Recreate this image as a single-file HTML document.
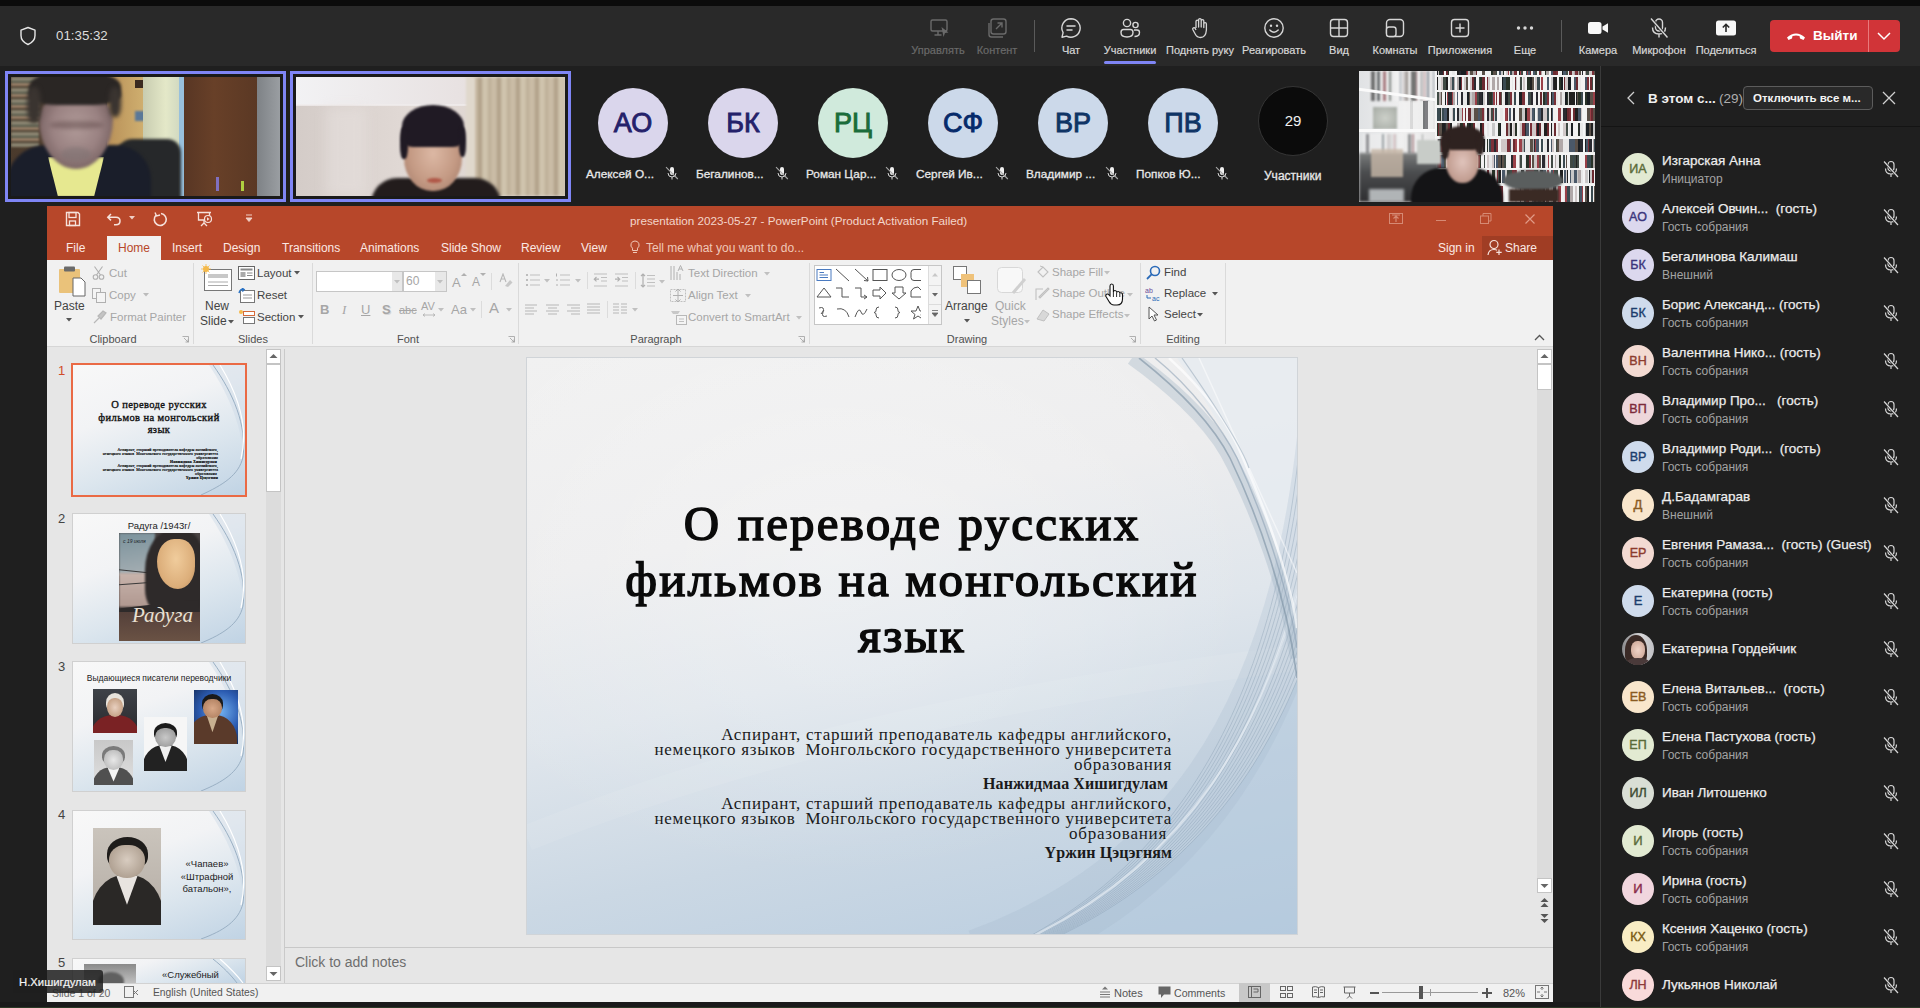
<!DOCTYPE html>
<html><head><meta charset="utf-8">
<style>
*{margin:0;padding:0;box-sizing:border-box}
html,body{width:1920px;height:1008px;overflow:hidden;background:#1f1f1f;font-family:"Liberation Sans",sans-serif;position:relative}
.a{position:absolute}
#topstrip{left:0;top:0;width:1920px;height:6px;background:#0b0b0b}
#hdr{left:0;top:6px;width:1920px;height:60px;background:#292929}
.tb{position:absolute;top:0;height:61px;text-align:center;color:#d6d6d6;font-size:11px}
.tb .lbl{position:absolute;left:-50px;width:100px;top:44px;-webkit-text-stroke:0.2px currentColor;text-align:center;white-space:nowrap}
.tb svg{position:absolute;left:-11px;top:17px;width:22px;height:22px}
.dis{color:#6a6a6a}
.sep{position:absolute;width:1px;background:#5a5a5a}
#panel{left:1600px;top:66px;width:320px;height:942px;background:#1f1f1f;border-left:1px solid #3a3a3a}
.vid{position:absolute;overflow:hidden}
.av{position:absolute;width:70px;height:70px;border-radius:50%;text-align:center;line-height:70px;font-size:27px;-webkit-text-stroke:0.9px currentColor}
.pt{color:#fbe9e4;font-size:12px;white-space:nowrap}
.rt{position:absolute;font-size:11.5px;color:#444;white-space:nowrap}
.rd{position:absolute;font-size:11.5px;color:#a6a6a6;white-space:nowrap}
.gl{position:absolute;font-size:11px;color:#505050;white-space:nowrap;text-align:center}
.gs{position:absolute;top:263px;width:1px;height:81px;background:#dadada}
.st{font-family:"Liberation Serif",serif;font-weight:normal;-webkit-text-stroke:1.5px #0a0a0a;letter-spacing:2.2px;font-size:49px;line-height:56px;color:#0a0a0a;text-align:center;white-space:nowrap}
.ss{left:527px;width:645px;text-align:right;font-family:"Liberation Serif",serif;font-size:17px;line-height:15px;letter-spacing:0.75px;color:#1a1a1a;white-space:pre}
.sb{font-weight:bold;font-size:16px;letter-spacing:0.1px}
.th{overflow:hidden;background:linear-gradient(160deg,#f8f8f8 0%,#f2f3f5 35%,#dce6ee 65%,#c0d3e4 100%)}
.avn{position:absolute;color:#e8e8e8;font-size:11.8px;white-space:nowrap;-webkit-text-stroke:0.3px #e8e8e8}
</style></head><body>
<div id="topstrip" class="a"></div>
<div id="hdr" class="a"></div>
<!-- header -->
<svg class="a" style="left:19px;top:26px" width="18" height="20" viewBox="0 0 18 20"><path d="M9 1.5 L16 4.2 V9.5 C16 13.8 13 16.8 9 18.5 C5 16.8 2 13.8 2 9.5 V4.2 Z" fill="none" stroke="#e6e6e6" stroke-width="1.4" stroke-linejoin="round"/></svg>
<div class="a" style="left:56px;top:28px;font-size:13.3px;color:#dcdcdc">01:35:32</div>

<div class="tb dis" style="left:938px"><svg viewBox="0 0 22 22"><rect x="4" y="3" width="16" height="11" rx="1.5" fill="none" stroke="#6a6a6a" stroke-width="1.4"/><path d="M7.5 18h7M11 14v4" stroke="#6a6a6a" stroke-width="1.4"/><path d="M14.5 10 L21.5 15.5 L18 16 L16.5 20 Z" fill="#6a6a6a"/></svg><div class="lbl">Управлять</div></div>
<div class="tb dis" style="left:997px"><svg viewBox="0 0 22 22"><rect x="5" y="2" width="15" height="15" rx="2.5" fill="none" stroke="#6a6a6a" stroke-width="1.4"/><path d="M3 6v11.5A2.5 2.5 0 0 0 5.5 20H17" fill="none" stroke="#6a6a6a" stroke-width="1.4"/><path d="M10 12 L16 6 M11.5 6 H16 V10.5" fill="none" stroke="#6a6a6a" stroke-width="1.4"/></svg><div class="lbl">Контент</div></div>
<div class="sep" style="left:1034px;top:20px;height:32px"></div>
<div class="tb" style="left:1071px"><svg viewBox="0 0 22 22"><path d="M11 1.8 A9.2 9.2 0 1 1 6.6 19.1 L2 20.2 L3.1 15.6 A9.2 9.2 0 0 1 11 1.8 Z" fill="none" stroke="#d6d6d6" stroke-width="1.4" stroke-linejoin="round"/><path d="M7 9h8M7 13h5" stroke="#d6d6d6" stroke-width="1.5" stroke-linecap="round"/></svg><div class="lbl">Чат</div></div>
<div class="tb" style="left:1130px"><svg viewBox="0 0 22 22"><circle cx="8" cy="6" r="3.6" fill="none" stroke="#d6d6d6" stroke-width="1.4"/><circle cx="16.5" cy="8" r="2.6" fill="none" stroke="#d6d6d6" stroke-width="1.4"/><path d="M2 15.5 Q2 12.5 4.5 12.5 H11.5 Q14 12.5 14 15.5 Q14 20 8 20 Q2 20 2 15.5 Z" fill="none" stroke="#d6d6d6" stroke-width="1.4"/><path d="M15.5 19.5 Q20.5 19.5 20.5 15.5 Q20.5 13 18 13 H15" fill="none" stroke="#d6d6d6" stroke-width="1.4"/></svg><div class="lbl">Участники</div></div>
<div class="a" style="left:1104px;top:61px;width:52px;height:3px;border-radius:2px;background:#7f85f5"></div>
<div class="tb" style="left:1200px"><svg viewBox="0 0 22 22"><path d="M7 11 V4.5 a1.3 1.3 0 0 1 2.6 0 V10 V3 a1.3 1.3 0 0 1 2.6 0 V10 V4 a1.3 1.3 0 0 1 2.6 0 V10.5 V7 a1.3 1.3 0 0 1 2.6 0 V13 Q16.8 20.5 11.5 20.5 Q8 20.5 6.2 17 L3.8 12.5 a1.3 1.3 0 0 1 2.3 -1.2 L7 13" fill="none" stroke="#d6d6d6" stroke-width="1.3" stroke-linejoin="round"/></svg><div class="lbl">Поднять руку</div></div>
<div class="tb" style="left:1274px"><svg viewBox="0 0 22 22"><circle cx="11" cy="11" r="9.2" fill="none" stroke="#d6d6d6" stroke-width="1.4"/><circle cx="8" cy="8.8" r="1.2" fill="#d6d6d6"/><circle cx="14" cy="8.8" r="1.2" fill="#d6d6d6"/><path d="M6.8 13 Q11 17.5 15.2 13" fill="none" stroke="#d6d6d6" stroke-width="1.4" stroke-linecap="round"/></svg><div class="lbl">Реагировать</div></div>
<div class="tb" style="left:1339px"><svg viewBox="0 0 22 22"><rect x="2.5" y="2.5" width="17" height="17" rx="3" fill="none" stroke="#d6d6d6" stroke-width="1.4"/><path d="M11 2.5v17M2.5 11h17" stroke="#d6d6d6" stroke-width="1.4"/></svg><div class="lbl">Вид</div></div>
<div class="tb" style="left:1395px"><svg viewBox="0 0 22 22"><rect x="2.5" y="2.5" width="17" height="17" rx="3.5" fill="none" stroke="#d6d6d6" stroke-width="1.4"/><rect x="2.5" y="10" width="9.5" height="9.5" rx="2.5" fill="#292929" stroke="#d6d6d6" stroke-width="1.4"/></svg><div class="lbl">Комнаты</div></div>
<div class="tb" style="left:1460px"><svg viewBox="0 0 22 22"><rect x="2.5" y="2.5" width="17" height="17" rx="3" fill="none" stroke="#d6d6d6" stroke-width="1.4"/><path d="M11 6.5v9M6.5 11h9" stroke="#d6d6d6" stroke-width="1.4"/></svg><div class="lbl">Приложения</div></div>
<div class="tb" style="left:1525px"><svg viewBox="0 0 22 22"><circle cx="4.5" cy="11" r="1.7" fill="#d6d6d6"/><circle cx="11" cy="11" r="1.7" fill="#d6d6d6"/><circle cx="17.5" cy="11" r="1.7" fill="#d6d6d6"/></svg><div class="lbl">Еще</div></div>
<div class="sep" style="left:1561px;top:20px;height:32px"></div>
<div class="tb" style="left:1598px"><svg viewBox="0 0 22 22"><rect x="1" y="5" width="13.5" height="12" rx="2.5" fill="#f8f8f8"/><path d="M15.5 9.5 L21 6.3 V15.7 L15.5 12.5 Z" fill="#f8f8f8"/></svg><div class="lbl">Камера</div></div>
<div class="tb" style="left:1659px"><svg viewBox="0 0 22 22"><rect x="7.5" y="2" width="7" height="12" rx="3.5" fill="none" stroke="#d6d6d6" stroke-width="1.4"/><path d="M4.5 10.5 Q4.5 17 11 17 Q17.5 17 17.5 10.5 M11 17v3.5" fill="none" stroke="#d6d6d6" stroke-width="1.4"/><path d="M3 1.5 L19.5 20.5" stroke="#292929" stroke-width="3"/><path d="M3 1.5 L19.5 20.5" stroke="#d6d6d6" stroke-width="1.4"/></svg><div class="lbl">Микрофон</div></div>
<div class="tb" style="left:1726px"><svg viewBox="0 0 22 22"><rect x="1" y="3.5" width="20" height="15" rx="2.5" fill="#f8f8f8"/><path d="M11 15V7.5M7.8 10.5 L11 7.3 L14.2 10.5" fill="none" stroke="#292929" stroke-width="1.6"/></svg><div class="lbl">Поделиться</div></div>
<div class="a" style="left:1770px;top:20px;width:130px;height:32px;border-radius:4px;background:#d13438"></div>
<div class="a" style="left:1868px;top:20px;width:1px;height:32px;background:#e87a7c"></div>
<svg class="a" style="left:1785px;top:28px" width="22" height="16" viewBox="0 0 22 16"><path d="M2 9.5 Q11 1.5 20 9.5 L18.5 12 L15 10.5 L14.5 8 Q11 6.8 7.5 8 L7 10.5 L3.5 12 Z" fill="#fff"/></svg>
<div class="a" style="left:1813px;top:28px;font-size:13.5px;font-weight:bold;color:#fff">Выйти</div>
<svg class="a" style="left:1876px;top:29px" width="16" height="14" viewBox="0 0 16 14"><path d="M2 4 L8 10 L14 4" fill="none" stroke="#fff" stroke-width="1.5"/></svg>

<!-- video tiles -->
<div class="a" style="left:5px;top:71px;width:281px;height:131px;border:3px solid #7f85f5;background:#1a1a1a"></div>
<div class="vid" style="left:11px;top:77px;width:269px;height:119px;background:#6b4a33">
  <div class="a" style="left:0;top:0;width:100px;height:119px;background:linear-gradient(90deg,#4a3a2c,#5a4836)"></div>
  <div class="a" style="left:0;top:0;width:28px;height:70px;background:repeating-linear-gradient(#8a8470 0 4px,#52584a 4px 6px,#9a8068 6px 9px,#4a3e30 9px 11px);filter:blur(1px)"></div>
  <div class="a" style="left:96px;top:0;width:38px;height:119px;background:linear-gradient(90deg,#b89058,#d0b070)"></div>
  <div class="a" style="left:124px;top:3px;width:10px;height:8px;background:#3a2a20"></div>
  <div class="a" style="left:124px;top:34px;width:10px;height:10px;background:#5a7898;filter:blur(1px)"></div>
  <div class="a" style="left:132px;top:0;width:38px;height:119px;background:linear-gradient(90deg,#c8ccb0,#e4e8c8 60%,#d0d8c0)"></div>
  <div class="a" style="left:168px;top:0;width:5px;height:119px;background:#98c0dc"></div>
  <div class="a" style="left:173px;top:0;width:75px;height:119px;background:linear-gradient(90deg,#583624,#684028 40%,#5a3824)"></div>
  <div class="a" style="left:246px;top:0;width:23px;height:119px;background:linear-gradient(90deg,#7e8286,#9a9ea2)"></div>
  <div class="a" style="left:205px;top:100px;width:3px;height:14px;background:#8070c0"></div>
  <div class="a" style="left:230px;top:104px;width:3px;height:10px;background:#b0d040"></div>
  <div class="a" style="left:104px;top:62px;width:66px;height:62px;border-radius:18px 14px 0 0;background:#26282a;filter:blur(1.5px)"></div>
  <div class="a" style="left:-5px;top:68px;width:145px;height:60px;border-radius:40px 35px 0 0;background:#1a1e2a;filter:blur(1.5px)"></div>
  <div class="a" style="left:37px;top:80px;width:56px;height:40px;background:#e6e890;clip-path:polygon(0 0,100% 0,82% 100%,18% 100%);filter:blur(1px)"></div>
  <div class="a" style="left:28px;top:16px;width:74px;height:76px;border-radius:40% 40% 50% 50% / 35% 35% 65% 65%;background:radial-gradient(ellipse at 50% 45%,#b09a98 0,#9a8282 45%,#786262 75%,#5a4a4a);filter:blur(1.5px)"></div>
  <div class="a" style="left:38px;top:44px;width:55px;height:8px;border-radius:50%;background:#5a4444;opacity:.45;filter:blur(2px)"></div>
  <div class="a" style="left:50px;top:70px;width:30px;height:14px;border-radius:50%;background:#7a7070;opacity:.5;filter:blur(2px)"></div>
  <div class="a" style="left:18px;top:-6px;width:92px;height:34px;border-radius:45% 45% 30% 30%;background:#2a2624;filter:blur(1.5px)"></div>
  <div class="a" style="left:16px;top:10px;width:14px;height:36px;border-radius:40%;background:#3a3430;filter:blur(2px)"></div>
  <div class="a" style="left:98px;top:10px;width:12px;height:30px;border-radius:40%;background:#3a3430;filter:blur(2px)"></div>
</div>
<div class="a" style="left:290px;top:71px;width:281px;height:131px;border:3px solid #7f85f5;background:#1a1a1a"></div>
<div class="vid" style="left:296px;top:77px;width:269px;height:119px;background:linear-gradient(90deg,#d4ccc8,#e2dad6 45%,#dcd2cc)">
  <div class="a" style="left:0;top:0;width:269px;height:28px;background:linear-gradient(90deg,#f2f2f4,#e8e2e2 60%,#dcd4d0)"></div>
  <div class="a" style="left:0;top:27px;width:180px;height:2px;background:#f0ecec;opacity:.8"></div>
  <div class="a" style="left:30px;top:30px;width:40px;height:89px;background:#e8e2e0;opacity:.5;filter:blur(6px)"></div>
  <div class="a" style="left:176px;top:0;width:93px;height:119px;background:repeating-linear-gradient(90deg,#cabca6 0 6px,#b0a088 6px 10px,#d0c4ae 10px 16px,#bcae96 16px 19px);filter:blur(1.8px)"></div>
  <div class="a" style="left:170px;top:0;width:9px;height:119px;background:#e0d8cc;filter:blur(1px)"></div>
  <div class="a" style="left:75px;top:101px;width:130px;height:26px;border-radius:40px 40px 0 0;background:#221c1c;filter:blur(1.5px)"></div>
  <div class="a" style="left:108px;top:46px;width:58px;height:68px;border-radius:40% 40% 48% 48%;background:radial-gradient(ellipse at 50% 45%,#dcb8a4,#c49a84 55%,#a07866);filter:blur(1.2px)"></div>
  <div class="a" style="left:131px;top:101px;width:15px;height:5px;border-radius:50%;background:#b05848;filter:blur(1px)"></div>
  <div class="a" style="left:106px;top:28px;width:62px;height:42px;border-radius:50% 50% 18% 18%;background:#201a24;filter:blur(1px)"></div>
  <div class="a" style="left:104px;top:50px;width:8px;height:32px;border-radius:40%;background:#201a24;filter:blur(1px)"></div>
  <div class="a" style="left:163px;top:50px;width:7px;height:30px;border-radius:40%;background:#201a24;filter:blur(1px)"></div>
  </div>
<!-- avatars -->
<div class="av" style="left:598px;top:88px;background:#dad6ec;color:#24216a">АО</div>
<div class="av" style="left:708px;top:88px;background:#dad6ec;color:#24216a">БК</div>
<div class="av" style="left:818px;top:88px;background:#d0eadc;color:#1b6c3b">РЦ</div>
<div class="av" style="left:928px;top:88px;background:#ccd9ea;color:#062a6a">СФ</div>
<div class="av" style="left:1038px;top:88px;background:#ccd9ea;color:#0f3465">ВР</div>
<div class="av" style="left:1148px;top:88px;background:#ccd9ea;color:#0f3465">ПВ</div>
<div class="av" style="left:1258px;top:86px;width:70px;height:70px;line-height:68px;background:#0b0b0b;border:1px solid #353535;color:#f0f0f0;font-size:15px;-webkit-text-stroke:0">29</div>
<div class="avn" style="left:586px;top:167px">Алексей О...</div>
<div class="avn" style="left:696px;top:167px">Бегалинов...</div>
<div class="avn" style="left:806px;top:167px">Роман Цар...</div>
<div class="avn" style="left:916px;top:167px">Сергей Ив...</div>
<div class="avn" style="left:1026px;top:167px">Владимир ...</div>
<div class="avn" style="left:1136px;top:167px">Попков Ю...</div>
<div class="avn" style="left:1264px;top:169px;font-size:12px">Участники</div>
<svg class="a" style="left:665px;top:166px" width="14" height="14" viewBox="0 0 14 14"><rect x="5" y="1" width="4" height="8" rx="2" fill="#f0f0f0"/><path d="M3 7 Q3 11 7 11 Q11 11 11 7 M7 11v2.5" fill="none" stroke="#d8d8d8" stroke-width="1"/><path d="M1 1.2 L12.8 13" stroke="#a8a8a8" stroke-width="1.1"/></svg>
<svg class="a" style="left:775px;top:166px" width="14" height="14" viewBox="0 0 14 14"><rect x="5" y="1" width="4" height="8" rx="2" fill="#f0f0f0"/><path d="M3 7 Q3 11 7 11 Q11 11 11 7 M7 11v2.5" fill="none" stroke="#d8d8d8" stroke-width="1"/><path d="M1 1.2 L12.8 13" stroke="#a8a8a8" stroke-width="1.1"/></svg>
<svg class="a" style="left:885px;top:166px" width="14" height="14" viewBox="0 0 14 14"><rect x="5" y="1" width="4" height="8" rx="2" fill="#f0f0f0"/><path d="M3 7 Q3 11 7 11 Q11 11 11 7 M7 11v2.5" fill="none" stroke="#d8d8d8" stroke-width="1"/><path d="M1 1.2 L12.8 13" stroke="#a8a8a8" stroke-width="1.1"/></svg>
<svg class="a" style="left:995px;top:166px" width="14" height="14" viewBox="0 0 14 14"><rect x="5" y="1" width="4" height="8" rx="2" fill="#f0f0f0"/><path d="M3 7 Q3 11 7 11 Q11 11 11 7 M7 11v2.5" fill="none" stroke="#d8d8d8" stroke-width="1"/><path d="M1 1.2 L12.8 13" stroke="#a8a8a8" stroke-width="1.1"/></svg>
<svg class="a" style="left:1105px;top:166px" width="14" height="14" viewBox="0 0 14 14"><rect x="5" y="1" width="4" height="8" rx="2" fill="#f0f0f0"/><path d="M3 7 Q3 11 7 11 Q11 11 11 7 M7 11v2.5" fill="none" stroke="#d8d8d8" stroke-width="1"/><path d="M1 1.2 L12.8 13" stroke="#a8a8a8" stroke-width="1.1"/></svg>
<svg class="a" style="left:1215px;top:166px" width="14" height="14" viewBox="0 0 14 14"><rect x="5" y="1" width="4" height="8" rx="2" fill="#f0f0f0"/><path d="M3 7 Q3 11 7 11 Q11 11 11 7 M7 11v2.5" fill="none" stroke="#d8d8d8" stroke-width="1"/><path d="M1 1.2 L12.8 13" stroke="#a8a8a8" stroke-width="1.1"/></svg>
<!-- video 3 -->
<div class="vid" style="left:1359px;top:71px;width:236px;height:131px;background:#f0f0ee">
<div class="a" style="left:0;top:0;width:76px;height:131px;background:linear-gradient(90deg,#e0e2e4,#f0f0f0 60%,#e6e6e6)"></div>
<div class="a" style="left:12px;top:0;width:64px;height:30px;background:linear-gradient(90deg,#202020 0.0px 2.0px,#202020 2.0px 4.0px,#f2f2f2 4.0px 6.5px,#1a1e22 6.5px 9.0px,#f2f2f2 9.0px 10.5px,#f2f2f2 10.5px 12.5px,#7a3038 12.5px 15.0px,#f2f2f2 15.0px 18.0px,#404a44 18.0px 20.0px,#e8e8e8 20.0px 23.0px,#f2f2f2 23.0px 25.5px,#f2f2f2 25.5px 28.0px,#f2f2f2 28.0px 29.0px,#4a5868 29.0px 30.5px,#f2f2f2 30.5px 32.5px,#b0a8a8 32.5px 35.0px,#5a5048 35.0px 36.5px,#5a5048 36.5px 37.5px,#f2f2f2 37.5px 40.5px,#202020 40.5px 43.0px,#283228 43.0px 44.0px,#2a2a30 44.0px 45.5px,#6a2a30 45.5px 46.5px,#f2f2f2 46.5px 48.5px,#f2f2f2 48.5px 50.5px,#2a2a30 50.5px 51.5px,#f2f2f2 51.5px 53.0px,#7a3038 53.0px 54.0px,#f2f2f2 54.0px 56.0px,#4a5868 56.0px 58.5px,#f2f2f2 58.5px 61.5px,#f2f2f2 61.5px 62.5px,#4a5868 62.5px 63.5px,#f2f2f2 63.5px 64.5px);filter:blur(0.8px);opacity:.6"></div>
<div class="a" style="left:0;top:22px;width:76px;height:3px;background:#fafafa;transform:skewY(8deg)"></div>
<div class="a" style="left:14px;top:36px;width:24px;height:22px;background:radial-gradient(#c8ccc4,#9aa098);filter:blur(1px);opacity:.85"></div>
<div class="a" style="left:40px;top:30px;width:34px;height:28px;background:linear-gradient(90deg,#f2f2f2 0.0px 3.0px,#f2f2f2 3.0px 4.0px,#f2f2f2 4.0px 6.0px,#f2f2f2 6.0px 8.5px,#f2f2f2 8.5px 11.0px,#c8c8c8 11.0px 14.0px,#f2f2f2 14.0px 17.0px,#f2f2f2 17.0px 19.0px,#f2f2f2 19.0px 20.5px,#f2f2f2 20.5px 23.0px,#f2f2f2 23.0px 24.0px,#1a1e22 24.0px 26.0px,#2a2a30 26.0px 29.0px,#f2f2f2 29.0px 30.5px,#f2f2f2 30.5px 32.5px,#f2f2f2 32.5px 35.0px);filter:blur(0.7px);opacity:.55"></div>
<div class="a" style="left:0;top:58px;width:80px;height:3px;background:#fafafa"></div>
<div class="a" style="left:4px;top:63px;width:60px;height:20px;background:linear-gradient(90deg,#f2f2f2 0.0px 2.0px,#f2f2f2 2.0px 3.0px,#2a2a30 3.0px 5.5px,#f2f2f2 5.5px 8.0px,#f2f2f2 8.0px 10.5px,#f2f2f2 10.5px 13.0px,#f2f2f2 13.0px 15.5px,#f2f2f2 15.5px 17.5px,#f2f2f2 17.5px 19.0px,#3a4a50 19.0px 20.5px,#f2f2f2 20.5px 23.5px,#b0a8a8 23.5px 26.5px,#c8c8c8 26.5px 28.0px,#c8c8c8 28.0px 30.0px,#f2f2f2 30.0px 31.0px,#9a4048 31.0px 32.0px,#c8c8c8 32.0px 33.5px,#f2f2f2 33.5px 35.5px,#f2f2f2 35.5px 38.0px,#f2f2f2 38.0px 40.5px,#e8e8e8 40.5px 43.5px,#f2f2f2 43.5px 45.0px,#1a1e22 45.0px 48.0px,#f2f2f2 48.0px 49.0px,#6a2a30 49.0px 50.5px,#f2f2f2 50.5px 52.5px,#f2f2f2 52.5px 54.0px,#f2f2f2 54.0px 55.5px,#e8e8e8 55.5px 58.0px,#f2f2f2 58.0px 59.0px,#404a44 59.0px 61.0px);filter:blur(0.8px);opacity:.45"></div>
<div class="a" style="left:76px;top:0px;width:160px;height:4px;background:linear-gradient(90deg,#1a1e22 0.0px 3.0px,#d0c8c8 3.0px 4.5px,#283228 4.5px 5.5px,#2a2a30 5.5px 8.5px,#6a2a30 8.5px 9.5px,#f2f2f2 9.5px 11.5px,#6a2a30 11.5px 13.5px,#283228 13.5px 14.5px,#f2f2f2 14.5px 17.5px,#e8e8e8 17.5px 20.5px,#404a44 20.5px 22.5px,#202020 22.5px 24.5px,#2a2a30 24.5px 26.5px,#1a1e22 26.5px 28.5px,#1a1e22 28.5px 31.5px,#6a2a30 31.5px 32.5px,#9a4048 32.5px 33.5px,#c8c8c8 33.5px 35.5px,#5a5048 35.5px 38.5px,#b0a8a8 38.5px 40.5px,#b0a8a8 40.5px 41.5px,#6a2a30 41.5px 42.5px,#f2f2f2 42.5px 44.5px,#f2f2f2 44.5px 47.5px,#5a5048 47.5px 50.0px,#283228 50.0px 52.0px,#f2f2f2 52.0px 54.0px,#f2f2f2 54.0px 56.5px,#283228 56.5px 58.0px,#5a5048 58.0px 61.0px,#404a44 61.0px 62.5px,#f2f2f2 62.5px 64.5px,#4a5868 64.5px 66.5px,#c8c8c8 66.5px 68.0px,#283228 68.0px 69.5px,#f2f2f2 69.5px 71.0px,#d0c8c8 71.0px 73.0px,#9a4048 73.0px 74.0px,#f2f2f2 74.0px 75.5px,#3a4a50 75.5px 77.5px,#b0a8a8 77.5px 79.5px,#7a3038 79.5px 81.5px,#6a2a30 81.5px 84.0px,#1a1e22 84.0px 85.0px,#9a4048 85.0px 86.0px,#404a44 86.0px 88.5px,#f2f2f2 88.5px 91.0px,#3a4a50 91.0px 92.5px,#9a4048 92.5px 93.5px,#4a5868 93.5px 95.0px,#6a2a30 95.0px 96.0px,#f2f2f2 96.0px 98.0px,#4a5868 98.0px 100.5px,#404a44 100.5px 102.5px,#f2f2f2 102.5px 104.0px,#7a3038 104.0px 106.0px,#b0a8a8 106.0px 107.0px,#f2f2f2 107.0px 110.0px,#283228 110.0px 111.5px,#b0a8a8 111.5px 114.0px,#4a5868 114.0px 116.5px,#4a5868 116.5px 118.0px,#6a2a30 118.0px 121.0px,#7a3038 121.0px 123.0px,#f2f2f2 123.0px 125.0px,#f2f2f2 125.0px 127.0px,#1a1e22 127.0px 128.0px,#4a5868 128.0px 131.0px,#404a44 131.0px 133.0px,#f2f2f2 133.0px 134.5px,#6a2a30 134.5px 137.5px,#c8c8c8 137.5px 139.0px,#b0a8a8 139.0px 140.0px,#7a3038 140.0px 142.0px,#6a2a30 142.0px 143.0px,#b0a8a8 143.0px 144.0px,#5a5048 144.0px 146.0px,#f2f2f2 146.0px 147.0px,#2a2a30 147.0px 148.0px,#404a44 148.0px 149.5px,#b0a8a8 149.5px 151.0px,#404a44 151.0px 154.0px,#d0c8c8 154.0px 157.0px,#7a3038 157.0px 159.0px,#5a5048 159.0px 160.0px);filter:blur(0.5px)"></div>
<div class="a" style="left:76px;top:5px;width:160px;height:14px;background:linear-gradient(90deg,#202020 0.0px 2.5px,#e8e8e8 2.5px 5.5px,#d0c8c8 5.5px 8.0px,#404a44 8.0px 10.5px,#202020 10.5px 12.5px,#f2f2f2 12.5px 15.0px,#b0a8a8 15.0px 16.5px,#3a4a50 16.5px 18.5px,#b0a8a8 18.5px 20.5px,#2a2a30 20.5px 21.5px,#b0a8a8 21.5px 24.0px,#1a1e22 24.0px 26.0px,#7a3038 26.0px 27.0px,#f2f2f2 27.0px 28.5px,#d0c8c8 28.5px 31.0px,#5a5048 31.0px 33.0px,#f2f2f2 33.0px 35.0px,#d0c8c8 35.0px 37.0px,#6a2a30 37.0px 39.0px,#2a2a30 39.0px 40.5px,#f2f2f2 40.5px 42.5px,#f2f2f2 42.5px 43.5px,#404a44 43.5px 45.0px,#283228 45.0px 47.0px,#6a2a30 47.0px 48.5px,#6a2a30 48.5px 50.5px,#7a3038 50.5px 53.0px,#d0c8c8 53.0px 54.5px,#f2f2f2 54.5px 56.5px,#b0a8a8 56.5px 59.5px,#f2f2f2 59.5px 62.0px,#b0a8a8 62.0px 63.5px,#f2f2f2 63.5px 66.5px,#1a1e22 66.5px 68.0px,#3a4a50 68.0px 70.5px,#283228 70.5px 73.5px,#283228 73.5px 75.0px,#f2f2f2 75.0px 76.5px,#e8e8e8 76.5px 78.0px,#f2f2f2 78.0px 79.5px,#6a2a30 79.5px 80.5px,#c8c8c8 80.5px 82.5px,#e8e8e8 82.5px 85.0px,#404a44 85.0px 86.5px,#f2f2f2 86.5px 87.5px,#d0c8c8 87.5px 90.0px,#f2f2f2 90.0px 92.0px,#283228 92.0px 94.5px,#202020 94.5px 97.0px,#5a5048 97.0px 98.5px,#f2f2f2 98.5px 99.5px,#d0c8c8 99.5px 102.0px,#3a4a50 102.0px 104.5px,#f2f2f2 104.5px 106.0px,#9a4048 106.0px 107.5px,#f2f2f2 107.5px 110.5px,#f2f2f2 110.5px 111.5px,#4a5868 111.5px 114.5px,#5a5048 114.5px 115.5px,#c8c8c8 115.5px 117.5px,#2a2a30 117.5px 119.0px,#202020 119.0px 122.0px,#f2f2f2 122.0px 123.5px,#283228 123.5px 125.5px,#1a1e22 125.5px 127.5px,#f2f2f2 127.5px 129.0px,#6a2a30 129.0px 130.0px,#d0c8c8 130.0px 133.0px,#1a1e22 133.0px 136.0px,#f2f2f2 136.0px 138.5px,#4a5868 138.5px 141.0px,#6a2a30 141.0px 143.0px,#e8e8e8 143.0px 146.0px,#f2f2f2 146.0px 148.0px,#7a3038 148.0px 150.0px,#4a5868 150.0px 152.0px,#7a3038 152.0px 153.5px,#f2f2f2 153.5px 155.0px,#6a2a30 155.0px 157.0px,#404a44 157.0px 158.0px,#f2f2f2 158.0px 160.5px);filter:blur(0.5px)"></div>
<div class="a" style="left:76px;top:21px;width:160px;height:13px;background:linear-gradient(90deg,#404a44 0.0px 2.0px,#404a44 2.0px 4.0px,#b0a8a8 4.0px 6.0px,#5a5048 6.0px 7.0px,#f2f2f2 7.0px 10.0px,#1a1e22 10.0px 11.0px,#f2f2f2 11.0px 12.0px,#9a4048 12.0px 13.0px,#2a2a30 13.0px 15.0px,#2a2a30 15.0px 16.5px,#9a4048 16.5px 17.5px,#b0a8a8 17.5px 19.5px,#1a1e22 19.5px 21.5px,#4a5868 21.5px 22.5px,#f2f2f2 22.5px 25.5px,#2a2a30 25.5px 28.0px,#e8e8e8 28.0px 30.0px,#e8e8e8 30.0px 32.0px,#1a1e22 32.0px 34.0px,#5a5048 34.0px 35.0px,#c8c8c8 35.0px 37.0px,#b0a8a8 37.0px 39.5px,#9a4048 39.5px 41.5px,#404a44 41.5px 44.0px,#2a2a30 44.0px 47.0px,#1a1e22 47.0px 48.0px,#c8c8c8 48.0px 49.0px,#d0c8c8 49.0px 52.0px,#2a2a30 52.0px 54.0px,#283228 54.0px 56.5px,#3a4a50 56.5px 57.5px,#9a4048 57.5px 59.5px,#f2f2f2 59.5px 61.0px,#7a3038 61.0px 62.0px,#f2f2f2 62.0px 64.0px,#6a2a30 64.0px 65.5px,#5a5048 65.5px 66.5px,#f2f2f2 66.5px 67.5px,#e8e8e8 67.5px 68.5px,#e8e8e8 68.5px 69.5px,#1a1e22 69.5px 72.5px,#404a44 72.5px 74.5px,#7a3038 74.5px 76.5px,#e8e8e8 76.5px 79.0px,#3a4a50 79.0px 81.0px,#f2f2f2 81.0px 83.0px,#1a1e22 83.0px 85.0px,#1a1e22 85.0px 87.0px,#7a3038 87.0px 90.0px,#f2f2f2 90.0px 92.5px,#3a4a50 92.5px 94.5px,#404a44 94.5px 96.0px,#2a2a30 96.0px 97.5px,#f2f2f2 97.5px 100.5px,#2a2a30 100.5px 102.5px,#f2f2f2 102.5px 105.0px,#6a2a30 105.0px 106.5px,#e8e8e8 106.5px 107.5px,#283228 107.5px 110.0px,#3a4a50 110.0px 112.0px,#7a3038 112.0px 114.0px,#6a2a30 114.0px 115.5px,#202020 115.5px 116.5px,#4a5868 116.5px 119.0px,#7a3038 119.0px 120.5px,#e8e8e8 120.5px 122.5px,#f2f2f2 122.5px 124.5px,#b0a8a8 124.5px 127.0px,#e8e8e8 127.0px 130.0px,#1a1e22 130.0px 132.0px,#283228 132.0px 133.0px,#c8c8c8 133.0px 134.0px,#202020 134.0px 136.5px,#202020 136.5px 139.5px,#f2f2f2 139.5px 140.5px,#1a1e22 140.5px 142.0px,#5a5048 142.0px 143.0px,#283228 143.0px 146.0px,#3a4a50 146.0px 148.0px,#283228 148.0px 150.0px,#283228 150.0px 152.0px,#1a1e22 152.0px 155.0px,#5a5048 155.0px 158.0px,#9a4048 158.0px 160.5px);filter:blur(0.5px)"></div>
<div class="a" style="left:76px;top:36px;width:160px;height:14px;background:linear-gradient(90deg,#c8c8c8 0.0px 2.0px,#3a4a50 2.0px 5.0px,#283228 5.0px 6.0px,#c8c8c8 6.0px 7.0px,#3a4a50 7.0px 9.5px,#4a5868 9.5px 12.5px,#202020 12.5px 14.5px,#e8e8e8 14.5px 17.0px,#d0c8c8 17.0px 18.0px,#3a4a50 18.0px 20.0px,#f2f2f2 20.0px 22.5px,#2a2a30 22.5px 24.0px,#c8c8c8 24.0px 27.0px,#9a4048 27.0px 28.0px,#f2f2f2 28.0px 30.5px,#6a2a30 30.5px 31.5px,#f2f2f2 31.5px 33.5px,#6a2a30 33.5px 36.5px,#c8c8c8 36.5px 39.5px,#5a5048 39.5px 41.0px,#5a5048 41.0px 43.5px,#4a5868 43.5px 45.5px,#5a5048 45.5px 47.5px,#7a3038 47.5px 49.5px,#d0c8c8 49.5px 50.5px,#202020 50.5px 51.5px,#2a2a30 51.5px 54.5px,#d0c8c8 54.5px 56.5px,#404a44 56.5px 58.5px,#7a3038 58.5px 59.5px,#c8c8c8 59.5px 60.5px,#3a4a50 60.5px 62.5px,#f2f2f2 62.5px 65.5px,#e8e8e8 65.5px 68.5px,#f2f2f2 68.5px 70.5px,#9a4048 70.5px 72.5px,#7a3038 72.5px 73.5px,#e8e8e8 73.5px 74.5px,#4a5868 74.5px 76.0px,#f2f2f2 76.0px 78.0px,#2a2a30 78.0px 80.0px,#f2f2f2 80.0px 82.0px,#1a1e22 82.0px 83.5px,#5a5048 83.5px 85.0px,#5a5048 85.0px 87.5px,#c8c8c8 87.5px 89.0px,#d0c8c8 89.0px 90.5px,#202020 90.5px 92.5px,#9a4048 92.5px 95.0px,#d0c8c8 95.0px 97.0px,#4a5868 97.0px 99.0px,#3a4a50 99.0px 100.0px,#f2f2f2 100.0px 102.0px,#c8c8c8 102.0px 103.5px,#4a5868 103.5px 106.0px,#2a2a30 106.0px 108.0px,#d0c8c8 108.0px 111.0px,#d0c8c8 111.0px 112.0px,#3a4a50 112.0px 114.0px,#202020 114.0px 117.0px,#4a5868 117.0px 118.5px,#f2f2f2 118.5px 120.5px,#f2f2f2 120.5px 123.0px,#9a4048 123.0px 126.0px,#e8e8e8 126.0px 128.5px,#2a2a30 128.5px 131.0px,#202020 131.0px 132.5px,#6a2a30 132.5px 134.0px,#7a3038 134.0px 136.0px,#f2f2f2 136.0px 138.5px,#6a2a30 138.5px 140.5px,#202020 140.5px 143.5px,#4a5868 143.5px 146.0px,#d0c8c8 146.0px 147.5px,#f2f2f2 147.5px 150.5px,#f2f2f2 150.5px 152.5px,#5a5048 152.5px 155.0px,#9a4048 155.0px 156.5px,#6a2a30 156.5px 158.5px,#5a5048 158.5px 161.0px);filter:blur(0.5px)"></div>
<div class="a" style="left:76px;top:52px;width:160px;height:13px;background:linear-gradient(90deg,#283228 0.0px 3.0px,#6a2a30 3.0px 4.0px,#5a5048 4.0px 7.0px,#202020 7.0px 10.0px,#2a2a30 10.0px 11.0px,#5a5048 11.0px 13.0px,#6a2a30 13.0px 14.5px,#202020 14.5px 16.5px,#f2f2f2 16.5px 19.5px,#f2f2f2 19.5px 22.0px,#b0a8a8 22.0px 25.0px,#283228 25.0px 28.0px,#6a2a30 28.0px 30.0px,#f2f2f2 30.0px 32.0px,#283228 32.0px 34.0px,#1a1e22 34.0px 36.0px,#283228 36.0px 38.0px,#6a2a30 38.0px 40.0px,#f2f2f2 40.0px 41.0px,#f2f2f2 41.0px 42.0px,#e8e8e8 42.0px 45.0px,#202020 45.0px 46.5px,#6a2a30 46.5px 48.5px,#e8e8e8 48.5px 49.5px,#4a5868 49.5px 50.5px,#202020 50.5px 51.5px,#e8e8e8 51.5px 53.5px,#f2f2f2 53.5px 56.5px,#c8c8c8 56.5px 58.0px,#c8c8c8 58.0px 60.0px,#f2f2f2 60.0px 62.5px,#283228 62.5px 64.5px,#1a1e22 64.5px 66.0px,#f2f2f2 66.0px 68.5px,#f2f2f2 68.5px 70.5px,#6a2a30 70.5px 72.5px,#b0a8a8 72.5px 75.0px,#202020 75.0px 77.0px,#e8e8e8 77.0px 78.0px,#d0c8c8 78.0px 80.0px,#283228 80.0px 82.0px,#e8e8e8 82.0px 84.5px,#d0c8c8 84.5px 87.0px,#7a3038 87.0px 89.5px,#2a2a30 89.5px 91.0px,#4a5868 91.0px 94.0px,#f2f2f2 94.0px 95.0px,#7a3038 95.0px 97.0px,#d0c8c8 97.0px 99.0px,#d0c8c8 99.0px 101.0px,#7a3038 101.0px 102.0px,#1a1e22 102.0px 103.5px,#6a2a30 103.5px 106.0px,#e8e8e8 106.0px 108.5px,#202020 108.5px 111.5px,#6a2a30 111.5px 113.5px,#d0c8c8 113.5px 114.5px,#1a1e22 114.5px 116.5px,#e8e8e8 116.5px 118.5px,#6a2a30 118.5px 121.0px,#f2f2f2 121.0px 123.0px,#d0c8c8 123.0px 124.5px,#f2f2f2 124.5px 127.5px,#d0c8c8 127.5px 130.5px,#404a44 130.5px 132.5px,#f2f2f2 132.5px 133.5px,#e8e8e8 133.5px 135.5px,#1a1e22 135.5px 138.0px,#f2f2f2 138.0px 140.0px,#f2f2f2 140.0px 142.5px,#283228 142.5px 144.0px,#2a2a30 144.0px 145.0px,#e8e8e8 145.0px 148.0px,#1a1e22 148.0px 150.0px,#c8c8c8 150.0px 151.0px,#1a1e22 151.0px 153.5px,#5a5048 153.5px 155.5px,#202020 155.5px 157.5px,#c8c8c8 157.5px 160.5px);filter:blur(0.5px)"></div>
<div class="a" style="left:76px;top:68px;width:160px;height:13px;background:linear-gradient(90deg,#d0c8c8 0.0px 1.0px,#b0a8a8 1.0px 3.5px,#2a2a30 3.5px 5.5px,#9a4048 5.5px 7.5px,#c8c8c8 7.5px 10.5px,#283228 10.5px 13.5px,#d0c8c8 13.5px 15.5px,#202020 15.5px 16.5px,#202020 16.5px 18.5px,#5a5048 18.5px 20.5px,#f2f2f2 20.5px 23.5px,#404a44 23.5px 25.0px,#d0c8c8 25.0px 27.0px,#7a3038 27.0px 28.0px,#b0a8a8 28.0px 31.0px,#e8e8e8 31.0px 33.0px,#c8c8c8 33.0px 34.5px,#f2f2f2 34.5px 37.0px,#f2f2f2 37.0px 38.0px,#f2f2f2 38.0px 39.5px,#5a5048 39.5px 42.0px,#7a3038 42.0px 43.0px,#f2f2f2 43.0px 45.0px,#f2f2f2 45.0px 46.5px,#c8c8c8 46.5px 48.5px,#1a1e22 48.5px 50.0px,#f2f2f2 50.0px 51.5px,#283228 51.5px 52.5px,#e8e8e8 52.5px 54.5px,#3a4a50 54.5px 56.5px,#7a3038 56.5px 58.5px,#f2f2f2 58.5px 59.5px,#2a2a30 59.5px 61.5px,#7a3038 61.5px 63.0px,#f2f2f2 63.0px 65.5px,#d0c8c8 65.5px 68.5px,#9a4048 68.5px 69.5px,#d0c8c8 69.5px 72.5px,#7a3038 72.5px 74.5px,#4a5868 74.5px 76.0px,#e8e8e8 76.0px 78.0px,#6a2a30 78.0px 79.5px,#9a4048 79.5px 82.5px,#b0a8a8 82.5px 84.0px,#9a4048 84.0px 87.0px,#b0a8a8 87.0px 89.0px,#3a4a50 89.0px 90.0px,#e8e8e8 90.0px 92.0px,#e8e8e8 92.0px 95.0px,#5a5048 95.0px 98.0px,#b0a8a8 98.0px 99.0px,#2a2a30 99.0px 100.0px,#9a4048 100.0px 101.0px,#4a5868 101.0px 103.5px,#f2f2f2 103.5px 106.0px,#3a4a50 106.0px 108.0px,#f2f2f2 108.0px 109.5px,#e8e8e8 109.5px 112.5px,#2a2a30 112.5px 114.0px,#4a5868 114.0px 116.5px,#d0c8c8 116.5px 119.0px,#f2f2f2 119.0px 121.0px,#404a44 121.0px 122.0px,#5a5048 122.0px 124.0px,#b0a8a8 124.0px 125.0px,#b0a8a8 125.0px 128.0px,#e8e8e8 128.0px 131.0px,#e8e8e8 131.0px 133.5px,#3a4a50 133.5px 134.5px,#4a5868 134.5px 137.5px,#4a5868 137.5px 139.5px,#5a5048 139.5px 142.5px,#1a1e22 142.5px 145.0px,#2a2a30 145.0px 147.5px,#7a3038 147.5px 149.0px,#202020 149.0px 150.0px,#1a1e22 150.0px 151.5px,#4a5868 151.5px 152.5px,#7a3038 152.5px 154.5px,#2a2a30 154.5px 156.5px,#f2f2f2 156.5px 157.5px,#b0a8a8 157.5px 159.0px,#3a4a50 159.0px 161.5px);filter:blur(0.5px)"></div>
<div class="a" style="left:76px;top:83px;width:160px;height:14px;background:linear-gradient(90deg,#f2f2f2 0.0px 2.5px,#7a3038 2.5px 4.5px,#7a3038 4.5px 6.5px,#4a5868 6.5px 9.0px,#404a44 9.0px 11.5px,#f2f2f2 11.5px 14.0px,#5a5048 14.0px 16.0px,#1a1e22 16.0px 19.0px,#f2f2f2 19.0px 21.0px,#7a3038 21.0px 23.0px,#2a2a30 23.0px 24.5px,#4a5868 24.5px 26.0px,#e8e8e8 26.0px 28.5px,#7a3038 28.5px 31.5px,#f2f2f2 31.5px 32.5px,#e8e8e8 32.5px 34.5px,#9a4048 34.5px 35.5px,#6a2a30 35.5px 37.5px,#7a3038 37.5px 38.5px,#9a4048 38.5px 41.5px,#f2f2f2 41.5px 43.5px,#6a2a30 43.5px 45.0px,#283228 45.0px 46.5px,#f2f2f2 46.5px 49.0px,#404a44 49.0px 50.5px,#1a1e22 50.5px 51.5px,#d0c8c8 51.5px 54.5px,#e8e8e8 54.5px 57.0px,#d0c8c8 57.0px 59.0px,#4a5868 59.0px 60.5px,#f2f2f2 60.5px 61.5px,#4a5868 61.5px 63.5px,#5a5048 63.5px 66.0px,#1a1e22 66.0px 67.5px,#5a5048 67.5px 69.5px,#404a44 69.5px 71.5px,#f2f2f2 71.5px 74.5px,#f2f2f2 74.5px 76.5px,#2a2a30 76.5px 78.5px,#9a4048 78.5px 81.5px,#f2f2f2 81.5px 84.0px,#b0a8a8 84.0px 85.5px,#404a44 85.5px 87.5px,#f2f2f2 87.5px 90.5px,#e8e8e8 90.5px 91.5px,#283228 91.5px 94.5px,#7a3038 94.5px 96.0px,#f2f2f2 96.0px 97.0px,#5a5048 97.0px 99.0px,#c8c8c8 99.0px 100.0px,#d0c8c8 100.0px 102.0px,#9a4048 102.0px 104.5px,#5a5048 104.5px 106.5px,#f2f2f2 106.5px 107.5px,#2a2a30 107.5px 110.0px,#c8c8c8 110.0px 111.5px,#e8e8e8 111.5px 113.5px,#9a4048 113.5px 116.0px,#404a44 116.0px 118.0px,#f2f2f2 118.0px 120.0px,#b0a8a8 120.0px 121.5px,#e8e8e8 121.5px 124.5px,#283228 124.5px 126.5px,#f2f2f2 126.5px 128.0px,#3a4a50 128.0px 130.0px,#f2f2f2 130.0px 131.5px,#5a5048 131.5px 132.5px,#f2f2f2 132.5px 135.0px,#404a44 135.0px 138.0px,#3a4a50 138.0px 139.0px,#404a44 139.0px 141.5px,#202020 141.5px 142.5px,#404a44 142.5px 144.5px,#f2f2f2 144.5px 146.5px,#f2f2f2 146.5px 148.5px,#f2f2f2 148.5px 150.5px,#9a4048 150.5px 152.5px,#3a4a50 152.5px 154.5px,#3a4a50 154.5px 156.0px,#283228 156.0px 158.0px,#b0a8a8 158.0px 161.0px);filter:blur(0.5px)"></div>
<div class="a" style="left:76px;top:99px;width:160px;height:13px;background:linear-gradient(90deg,#d0c8c8 0.0px 1.0px,#5a5048 1.0px 3.0px,#202020 3.0px 5.5px,#d0c8c8 5.5px 8.0px,#6a2a30 8.0px 9.0px,#d0c8c8 9.0px 11.0px,#c8c8c8 11.0px 13.0px,#9a4048 13.0px 15.0px,#d0c8c8 15.0px 17.0px,#f2f2f2 17.0px 19.0px,#d0c8c8 19.0px 20.0px,#9a4048 20.0px 22.0px,#404a44 22.0px 25.0px,#283228 25.0px 27.0px,#f2f2f2 27.0px 29.0px,#4a5868 29.0px 32.0px,#1a1e22 32.0px 33.0px,#c8c8c8 33.0px 35.5px,#202020 35.5px 36.5px,#c8c8c8 36.5px 38.5px,#f2f2f2 38.5px 40.5px,#9a4048 40.5px 42.0px,#5a5048 42.0px 44.0px,#f2f2f2 44.0px 45.0px,#9a4048 45.0px 46.5px,#b0a8a8 46.5px 49.5px,#c8c8c8 49.5px 50.5px,#5a5048 50.5px 51.5px,#6a2a30 51.5px 54.5px,#d0c8c8 54.5px 57.0px,#283228 57.0px 60.0px,#d0c8c8 60.0px 62.0px,#7a3038 62.0px 63.0px,#404a44 63.0px 64.5px,#202020 64.5px 66.0px,#f2f2f2 66.0px 67.5px,#4a5868 67.5px 70.0px,#c8c8c8 70.0px 72.5px,#404a44 72.5px 74.5px,#404a44 74.5px 77.0px,#7a3038 77.0px 78.5px,#7a3038 78.5px 80.0px,#6a2a30 80.0px 81.5px,#9a4048 81.5px 82.5px,#b0a8a8 82.5px 83.5px,#e8e8e8 83.5px 86.5px,#202020 86.5px 89.0px,#f2f2f2 89.0px 91.0px,#7a3038 91.0px 93.0px,#7a3038 93.0px 96.0px,#7a3038 96.0px 99.0px,#283228 99.0px 102.0px,#202020 102.0px 103.5px,#c8c8c8 103.5px 105.0px,#1a1e22 105.0px 108.0px,#4a5868 108.0px 111.0px,#f2f2f2 111.0px 112.5px,#9a4048 112.5px 114.5px,#2a2a30 114.5px 116.0px,#4a5868 116.0px 118.0px,#9a4048 118.0px 119.5px,#404a44 119.5px 121.5px,#404a44 121.5px 123.5px,#f2f2f2 123.5px 125.0px,#202020 125.0px 128.0px,#f2f2f2 128.0px 129.0px,#4a5868 129.0px 131.0px,#d0c8c8 131.0px 132.0px,#202020 132.0px 133.0px,#f2f2f2 133.0px 135.0px,#4a5868 135.0px 136.0px,#c8c8c8 136.0px 139.0px,#4a5868 139.0px 142.0px,#c8c8c8 142.0px 143.5px,#b0a8a8 143.5px 146.5px,#e8e8e8 146.5px 148.5px,#f2f2f2 148.5px 150.5px,#d0c8c8 150.5px 151.5px,#c8c8c8 151.5px 153.5px,#f2f2f2 153.5px 154.5px,#1a1e22 154.5px 155.5px,#c8c8c8 155.5px 157.0px,#6a2a30 157.0px 159.0px,#f2f2f2 159.0px 161.0px);filter:blur(0.5px)"></div>
<div class="a" style="left:76px;top:114px;width:160px;height:17px;background:linear-gradient(90deg,#2a2a30 0.0px 2.5px,#f2f2f2 2.5px 4.0px,#2a2a30 4.0px 6.0px,#e8e8e8 6.0px 7.5px,#c8c8c8 7.5px 9.0px,#f2f2f2 9.0px 11.0px,#c8c8c8 11.0px 13.0px,#f2f2f2 13.0px 15.5px,#202020 15.5px 18.0px,#3a4a50 18.0px 20.5px,#4a5868 20.5px 22.5px,#7a3038 22.5px 24.5px,#f2f2f2 24.5px 25.5px,#b0a8a8 25.5px 26.5px,#9a4048 26.5px 27.5px,#f2f2f2 27.5px 29.5px,#b0a8a8 29.5px 32.0px,#f2f2f2 32.0px 34.0px,#f2f2f2 34.0px 35.5px,#f2f2f2 35.5px 37.5px,#3a4a50 37.5px 40.0px,#9a4048 40.0px 43.0px,#4a5868 43.0px 45.5px,#5a5048 45.5px 46.5px,#c8c8c8 46.5px 48.5px,#1a1e22 48.5px 50.5px,#f2f2f2 50.5px 51.5px,#c8c8c8 51.5px 53.0px,#404a44 53.0px 56.0px,#283228 56.0px 58.0px,#283228 58.0px 61.0px,#d0c8c8 61.0px 63.0px,#6a2a30 63.0px 66.0px,#7a3038 66.0px 68.0px,#f2f2f2 68.0px 69.5px,#f2f2f2 69.5px 72.5px,#e8e8e8 72.5px 74.5px,#f2f2f2 74.5px 76.5px,#e8e8e8 76.5px 78.0px,#f2f2f2 78.0px 80.0px,#c8c8c8 80.0px 82.0px,#b0a8a8 82.0px 83.0px,#f2f2f2 83.0px 84.5px,#4a5868 84.5px 86.0px,#f2f2f2 86.0px 88.5px,#3a4a50 88.5px 90.5px,#7a3038 90.5px 92.5px,#6a2a30 92.5px 94.0px,#d0c8c8 94.0px 97.0px,#4a5868 97.0px 99.0px,#2a2a30 99.0px 101.0px,#404a44 101.0px 102.5px,#2a2a30 102.5px 104.5px,#283228 104.5px 106.0px,#404a44 106.0px 108.0px,#1a1e22 108.0px 110.0px,#f2f2f2 110.0px 111.0px,#5a5048 111.0px 114.0px,#c8c8c8 114.0px 116.0px,#c8c8c8 116.0px 118.0px,#2a2a30 118.0px 120.5px,#b0a8a8 120.5px 123.0px,#9a4048 123.0px 126.0px,#f2f2f2 126.0px 128.5px,#e8e8e8 128.5px 129.5px,#9a4048 129.5px 132.0px,#3a4a50 132.0px 135.0px,#b0a8a8 135.0px 138.0px,#f2f2f2 138.0px 140.0px,#d0c8c8 140.0px 141.5px,#f2f2f2 141.5px 143.5px,#404a44 143.5px 145.0px,#4a5868 145.0px 146.5px,#9a4048 146.5px 147.5px,#f2f2f2 147.5px 148.5px,#9a4048 148.5px 149.5px,#5a5048 149.5px 152.0px,#202020 152.0px 153.5px,#f2f2f2 153.5px 155.5px,#3a4a50 155.5px 157.5px,#f2f2f2 157.5px 158.5px,#5a5048 158.5px 160.5px);filter:blur(0.5px)"></div>
<div class="a" style="left:76px;top:4px;width:160px;height:2px;background:#f4f4f4"></div>
<div class="a" style="left:76px;top:19px;width:160px;height:2px;background:#f4f4f4"></div>
<div class="a" style="left:76px;top:35px;width:160px;height:2px;background:#f4f4f4"></div>
<div class="a" style="left:76px;top:50px;width:160px;height:2px;background:#f4f4f4"></div>
<div class="a" style="left:76px;top:66px;width:160px;height:2px;background:#f4f4f4"></div>
<div class="a" style="left:76px;top:82px;width:160px;height:2px;background:#f4f4f4"></div>
<div class="a" style="left:76px;top:97px;width:160px;height:2px;background:#f4f4f4"></div>
<div class="a" style="left:76px;top:113px;width:160px;height:2px;background:#f4f4f4"></div>
<div class="a" style="left:76px;top:0;width:2px;height:131px;background:#f4f4f4"></div>
<div class="a" style="left:96px;top:0;width:2px;height:131px;background:#f4f4f4"></div>
<div class="a" style="left:126px;top:0;width:2px;height:131px;background:#f4f4f4"></div>
<div class="a" style="left:158px;top:0;width:2px;height:131px;background:#f4f4f4"></div>
<div class="a" style="left:190px;top:0;width:2px;height:131px;background:#f4f4f4"></div>
<div class="a" style="left:224px;top:0;width:2px;height:131px;background:#f4f4f4"></div>
<div class="a" style="left:0;top:82px;width:80px;height:49px;background:linear-gradient(#7a7c7c,#4a4c4e 40%,#2e2e30);filter:blur(1.5px)"></div>
<div class="a" style="left:12px;top:78px;width:32px;height:28px;background:#c8b8a8;opacity:.8;filter:blur(1px)"></div>
<div class="a" style="left:10px;top:118px;width:35px;height:13px;background:#b0b4b6;filter:blur(1.5px)"></div>
<div class="a" style="left:58px;top:69px;width:24px;height:24px;background:#c8ccc8;filter:blur(1px)"></div>
<div class="a" style="left:144px;top:99px;width:60px;height:21px;border-radius:50%;background:#5a5e5e;filter:blur(1px)"></div>
<div class="a" style="left:150px;top:118px;width:50px;height:13px;background:#3a2a24;filter:blur(1px)"></div>
<div class="a" style="left:52px;top:97px;width:92px;height:40px;border-radius:30px 30px 0 0;background:#141416;filter:blur(1.2px)"></div>
<div class="a" style="left:87px;top:70px;width:33px;height:42px;border-radius:42% 42% 48% 48%;background:radial-gradient(ellipse at 50% 50%,#e0c4bc,#c4a094 60%,#9a786c);filter:blur(0.8px)"></div>
<div class="a" style="left:82px;top:55px;width:43px;height:24px;border-radius:50% 50% 25% 25%;background:#2e2220;filter:blur(1px)"></div>
<div class="a" style="left:82px;top:64px;width:8px;height:24px;border-radius:40%;background:#2e2220;filter:blur(1px)"></div>
<div class="a" style="left:117px;top:64px;width:8px;height:20px;border-radius:40%;background:#2e2220;filter:blur(1px)"></div>
</div>
<div id="panel" class="a"></div>
<div class="a" style="left:1601px;top:126px;width:319px;height:1px;background:#141414"></div>
<svg class="a" style="left:1625px;top:90px" width="12" height="16" viewBox="0 0 12 16"><path d="M9 2 L3 8 L9 14" fill="none" stroke="#cfcfcf" stroke-width="1.3"/></svg>
<div class="a" style="left:1648px;top:91px;font-size:13.5px;font-weight:bold;color:#f0f0f0">В этом с...</div>
<div class="a" style="left:1719px;top:91px;font-size:13.5px;color:#adadad">(29)</div>
<div class="a" style="left:1743px;top:86px;width:130px;height:24px;border:1px solid #5c5c5c;border-radius:4px;background:#292929"></div>
<div class="a" style="left:1753px;top:92px;font-size:11.5px;font-weight:bold;color:#f4f4f4;white-space:nowrap">Отключить все м...</div>
<svg class="a" style="left:1881px;top:90px" width="16" height="16" viewBox="0 0 16 16"><path d="M2 2 L14 14 M14 2 L2 14" stroke="#d0d0d0" stroke-width="1.3"/></svg>
<div class="a" style="left:1622px;top:153px;width:32px;height:32px;border-radius:50%;background:#e2ead2;color:#5a6b38;font-size:12.5px;text-align:center;line-height:32px;-webkit-text-stroke:0.4px #5a6b38">ИА</div>
<div class="a" style="left:1662px;top:153px;font-size:13.5px;color:#ececec;white-space:pre;-webkit-text-stroke:0.25px #ececec">Изгарская Анна</div>
<div class="a" style="left:1662px;top:172px;font-size:12px;color:#a3a3a3;white-space:pre">Инициатор</div>
<svg class="a" style="left:1882px;top:160px" width="18" height="18" viewBox="0 0 18 18"><rect x="6" y="1.5" width="6" height="9.5" rx="3" fill="none" stroke="#d6d6d6" stroke-width="1.2"/><path d="M3.5 8.5 Q3.5 14 9 14 Q14.5 14 14.5 8.5 M9 14v3" fill="none" stroke="#d6d6d6" stroke-width="1.2"/><path d="M2 1.5 L16 17" stroke="#1f1f1f" stroke-width="2.6"/><path d="M2 1.5 L16 17" stroke="#d6d6d6" stroke-width="1.2"/></svg>
<div class="a" style="left:1622px;top:201px;width:32px;height:32px;border-radius:50%;background:#dcd8ee;color:#3b357c;font-size:12.5px;text-align:center;line-height:32px;-webkit-text-stroke:0.4px #3b357c">АО</div>
<div class="a" style="left:1662px;top:201px;font-size:13.5px;color:#ececec;white-space:pre;-webkit-text-stroke:0.25px #ececec">Алексей Овчин...  (гость)</div>
<div class="a" style="left:1662px;top:220px;font-size:12px;color:#a3a3a3;white-space:pre">Гость собрания</div>
<svg class="a" style="left:1882px;top:208px" width="18" height="18" viewBox="0 0 18 18"><rect x="6" y="1.5" width="6" height="9.5" rx="3" fill="none" stroke="#d6d6d6" stroke-width="1.2"/><path d="M3.5 8.5 Q3.5 14 9 14 Q14.5 14 14.5 8.5 M9 14v3" fill="none" stroke="#d6d6d6" stroke-width="1.2"/><path d="M2 1.5 L16 17" stroke="#1f1f1f" stroke-width="2.6"/><path d="M2 1.5 L16 17" stroke="#d6d6d6" stroke-width="1.2"/></svg>
<div class="a" style="left:1622px;top:249px;width:32px;height:32px;border-radius:50%;background:#dcd8ee;color:#3b357c;font-size:12.5px;text-align:center;line-height:32px;-webkit-text-stroke:0.4px #3b357c">БК</div>
<div class="a" style="left:1662px;top:249px;font-size:13.5px;color:#ececec;white-space:pre;-webkit-text-stroke:0.25px #ececec">Бегалинова Калимаш</div>
<div class="a" style="left:1662px;top:268px;font-size:12px;color:#a3a3a3;white-space:pre">Внешний</div>
<svg class="a" style="left:1882px;top:256px" width="18" height="18" viewBox="0 0 18 18"><rect x="6" y="1.5" width="6" height="9.5" rx="3" fill="none" stroke="#d6d6d6" stroke-width="1.2"/><path d="M3.5 8.5 Q3.5 14 9 14 Q14.5 14 14.5 8.5 M9 14v3" fill="none" stroke="#d6d6d6" stroke-width="1.2"/><path d="M2 1.5 L16 17" stroke="#1f1f1f" stroke-width="2.6"/><path d="M2 1.5 L16 17" stroke="#d6d6d6" stroke-width="1.2"/></svg>
<div class="a" style="left:1622px;top:297px;width:32px;height:32px;border-radius:50%;background:#cfdbec;color:#1c3d6c;font-size:12.5px;text-align:center;line-height:32px;-webkit-text-stroke:0.4px #1c3d6c">БК</div>
<div class="a" style="left:1662px;top:297px;font-size:13.5px;color:#ececec;white-space:pre;-webkit-text-stroke:0.25px #ececec">Борис Александ... (гость)</div>
<div class="a" style="left:1662px;top:316px;font-size:12px;color:#a3a3a3;white-space:pre">Гость собрания</div>
<svg class="a" style="left:1882px;top:304px" width="18" height="18" viewBox="0 0 18 18"><rect x="6" y="1.5" width="6" height="9.5" rx="3" fill="none" stroke="#d6d6d6" stroke-width="1.2"/><path d="M3.5 8.5 Q3.5 14 9 14 Q14.5 14 14.5 8.5 M9 14v3" fill="none" stroke="#d6d6d6" stroke-width="1.2"/><path d="M2 1.5 L16 17" stroke="#1f1f1f" stroke-width="2.6"/><path d="M2 1.5 L16 17" stroke="#d6d6d6" stroke-width="1.2"/></svg>
<div class="a" style="left:1622px;top:345px;width:32px;height:32px;border-radius:50%;background:#f3dad2;color:#8c3b2e;font-size:12.5px;text-align:center;line-height:32px;-webkit-text-stroke:0.4px #8c3b2e">ВН</div>
<div class="a" style="left:1662px;top:345px;font-size:13.5px;color:#ececec;white-space:pre;-webkit-text-stroke:0.25px #ececec">Валентина Нико... (гость)</div>
<div class="a" style="left:1662px;top:364px;font-size:12px;color:#a3a3a3;white-space:pre">Гость собрания</div>
<svg class="a" style="left:1882px;top:352px" width="18" height="18" viewBox="0 0 18 18"><rect x="6" y="1.5" width="6" height="9.5" rx="3" fill="none" stroke="#d6d6d6" stroke-width="1.2"/><path d="M3.5 8.5 Q3.5 14 9 14 Q14.5 14 14.5 8.5 M9 14v3" fill="none" stroke="#d6d6d6" stroke-width="1.2"/><path d="M2 1.5 L16 17" stroke="#1f1f1f" stroke-width="2.6"/><path d="M2 1.5 L16 17" stroke="#d6d6d6" stroke-width="1.2"/></svg>
<div class="a" style="left:1622px;top:393px;width:32px;height:32px;border-radius:50%;background:#eed6da;color:#7c2a3a;font-size:12.5px;text-align:center;line-height:32px;-webkit-text-stroke:0.4px #7c2a3a">ВП</div>
<div class="a" style="left:1662px;top:393px;font-size:13.5px;color:#ececec;white-space:pre;-webkit-text-stroke:0.25px #ececec">Владимир Про...   (гость)</div>
<div class="a" style="left:1662px;top:412px;font-size:12px;color:#a3a3a3;white-space:pre">Гость собрания</div>
<svg class="a" style="left:1882px;top:400px" width="18" height="18" viewBox="0 0 18 18"><rect x="6" y="1.5" width="6" height="9.5" rx="3" fill="none" stroke="#d6d6d6" stroke-width="1.2"/><path d="M3.5 8.5 Q3.5 14 9 14 Q14.5 14 14.5 8.5 M9 14v3" fill="none" stroke="#d6d6d6" stroke-width="1.2"/><path d="M2 1.5 L16 17" stroke="#1f1f1f" stroke-width="2.6"/><path d="M2 1.5 L16 17" stroke="#d6d6d6" stroke-width="1.2"/></svg>
<div class="a" style="left:1622px;top:441px;width:32px;height:32px;border-radius:50%;background:#cfdbec;color:#1c3d6c;font-size:12.5px;text-align:center;line-height:32px;-webkit-text-stroke:0.4px #1c3d6c">ВР</div>
<div class="a" style="left:1662px;top:441px;font-size:13.5px;color:#ececec;white-space:pre;-webkit-text-stroke:0.25px #ececec">Владимир Роди...  (гость)</div>
<div class="a" style="left:1662px;top:460px;font-size:12px;color:#a3a3a3;white-space:pre">Гость собрания</div>
<svg class="a" style="left:1882px;top:448px" width="18" height="18" viewBox="0 0 18 18"><rect x="6" y="1.5" width="6" height="9.5" rx="3" fill="none" stroke="#d6d6d6" stroke-width="1.2"/><path d="M3.5 8.5 Q3.5 14 9 14 Q14.5 14 14.5 8.5 M9 14v3" fill="none" stroke="#d6d6d6" stroke-width="1.2"/><path d="M2 1.5 L16 17" stroke="#1f1f1f" stroke-width="2.6"/><path d="M2 1.5 L16 17" stroke="#d6d6d6" stroke-width="1.2"/></svg>
<div class="a" style="left:1622px;top:489px;width:32px;height:32px;border-radius:50%;background:#f9e6cc;color:#8a5a22;font-size:13px;text-align:center;line-height:32px;-webkit-text-stroke:0.4px #8a5a22">Д</div>
<div class="a" style="left:1662px;top:489px;font-size:13.5px;color:#ececec;white-space:pre;-webkit-text-stroke:0.25px #ececec">Д.Бадамгарав</div>
<div class="a" style="left:1662px;top:508px;font-size:12px;color:#a3a3a3;white-space:pre">Внешний</div>
<svg class="a" style="left:1882px;top:496px" width="18" height="18" viewBox="0 0 18 18"><rect x="6" y="1.5" width="6" height="9.5" rx="3" fill="none" stroke="#d6d6d6" stroke-width="1.2"/><path d="M3.5 8.5 Q3.5 14 9 14 Q14.5 14 14.5 8.5 M9 14v3" fill="none" stroke="#d6d6d6" stroke-width="1.2"/><path d="M2 1.5 L16 17" stroke="#1f1f1f" stroke-width="2.6"/><path d="M2 1.5 L16 17" stroke="#d6d6d6" stroke-width="1.2"/></svg>
<div class="a" style="left:1622px;top:537px;width:32px;height:32px;border-radius:50%;background:#f3dad2;color:#8c3b2e;font-size:12.5px;text-align:center;line-height:32px;-webkit-text-stroke:0.4px #8c3b2e">ЕР</div>
<div class="a" style="left:1662px;top:537px;font-size:13.5px;color:#ececec;white-space:pre;-webkit-text-stroke:0.25px #ececec">Евгения Рамаза...  (гость) (Guest)</div>
<div class="a" style="left:1662px;top:556px;font-size:12px;color:#a3a3a3;white-space:pre">Гость собрания</div>
<svg class="a" style="left:1882px;top:544px" width="18" height="18" viewBox="0 0 18 18"><rect x="6" y="1.5" width="6" height="9.5" rx="3" fill="none" stroke="#d6d6d6" stroke-width="1.2"/><path d="M3.5 8.5 Q3.5 14 9 14 Q14.5 14 14.5 8.5 M9 14v3" fill="none" stroke="#d6d6d6" stroke-width="1.2"/><path d="M2 1.5 L16 17" stroke="#1f1f1f" stroke-width="2.6"/><path d="M2 1.5 L16 17" stroke="#d6d6d6" stroke-width="1.2"/></svg>
<div class="a" style="left:1622px;top:585px;width:32px;height:32px;border-radius:50%;background:#cfdbec;color:#1c3d6c;font-size:13px;text-align:center;line-height:32px;-webkit-text-stroke:0.4px #1c3d6c">Е</div>
<div class="a" style="left:1662px;top:585px;font-size:13.5px;color:#ececec;white-space:pre;-webkit-text-stroke:0.25px #ececec">Екатерина (гость)</div>
<div class="a" style="left:1662px;top:604px;font-size:12px;color:#a3a3a3;white-space:pre">Гость собрания</div>
<svg class="a" style="left:1882px;top:592px" width="18" height="18" viewBox="0 0 18 18"><rect x="6" y="1.5" width="6" height="9.5" rx="3" fill="none" stroke="#d6d6d6" stroke-width="1.2"/><path d="M3.5 8.5 Q3.5 14 9 14 Q14.5 14 14.5 8.5 M9 14v3" fill="none" stroke="#d6d6d6" stroke-width="1.2"/><path d="M2 1.5 L16 17" stroke="#1f1f1f" stroke-width="2.6"/><path d="M2 1.5 L16 17" stroke="#d6d6d6" stroke-width="1.2"/></svg>
<div class="a" style="left:1622px;top:633px;width:32px;height:32px;border-radius:50%;overflow:hidden;background:linear-gradient(90deg,#8a8a8c,#d8d8da 60%,#c0c0c4)"><div class="a" style="left:3px;top:2px;width:22px;height:30px;border-radius:50% 50% 30% 30%;background:#3a2a26"></div><div class="a" style="left:9px;top:8px;width:14px;height:18px;border-radius:45%;background:radial-gradient(#f0d4c8,#c8a090)"></div><div class="a" style="left:4px;top:25px;width:24px;height:10px;border-radius:50% 50% 0 0;background:#4a3a3a"></div></div>
<div class="a" style="left:1662px;top:641px;font-size:13.5px;color:#ececec;white-space:pre;-webkit-text-stroke:0.25px #ececec">Екатерина Гордейчик</div>
<svg class="a" style="left:1882px;top:640px" width="18" height="18" viewBox="0 0 18 18"><rect x="6" y="1.5" width="6" height="9.5" rx="3" fill="none" stroke="#d6d6d6" stroke-width="1.2"/><path d="M3.5 8.5 Q3.5 14 9 14 Q14.5 14 14.5 8.5 M9 14v3" fill="none" stroke="#d6d6d6" stroke-width="1.2"/><path d="M2 1.5 L16 17" stroke="#1f1f1f" stroke-width="2.6"/><path d="M2 1.5 L16 17" stroke="#d6d6d6" stroke-width="1.2"/></svg>
<div class="a" style="left:1622px;top:681px;width:32px;height:32px;border-radius:50%;background:#f9e6cc;color:#8a5a22;font-size:12.5px;text-align:center;line-height:32px;-webkit-text-stroke:0.4px #8a5a22">ЕВ</div>
<div class="a" style="left:1662px;top:681px;font-size:13.5px;color:#ececec;white-space:pre;-webkit-text-stroke:0.25px #ececec">Елена Витальев...  (гость)</div>
<div class="a" style="left:1662px;top:700px;font-size:12px;color:#a3a3a3;white-space:pre">Гость собрания</div>
<svg class="a" style="left:1882px;top:688px" width="18" height="18" viewBox="0 0 18 18"><rect x="6" y="1.5" width="6" height="9.5" rx="3" fill="none" stroke="#d6d6d6" stroke-width="1.2"/><path d="M3.5 8.5 Q3.5 14 9 14 Q14.5 14 14.5 8.5 M9 14v3" fill="none" stroke="#d6d6d6" stroke-width="1.2"/><path d="M2 1.5 L16 17" stroke="#1f1f1f" stroke-width="2.6"/><path d="M2 1.5 L16 17" stroke="#d6d6d6" stroke-width="1.2"/></svg>
<div class="a" style="left:1622px;top:729px;width:32px;height:32px;border-radius:50%;background:#e2ead2;color:#5a6b38;font-size:12.5px;text-align:center;line-height:32px;-webkit-text-stroke:0.4px #5a6b38">ЕП</div>
<div class="a" style="left:1662px;top:729px;font-size:13.5px;color:#ececec;white-space:pre;-webkit-text-stroke:0.25px #ececec">Елена Пастухова (гость)</div>
<div class="a" style="left:1662px;top:748px;font-size:12px;color:#a3a3a3;white-space:pre">Гость собрания</div>
<svg class="a" style="left:1882px;top:736px" width="18" height="18" viewBox="0 0 18 18"><rect x="6" y="1.5" width="6" height="9.5" rx="3" fill="none" stroke="#d6d6d6" stroke-width="1.2"/><path d="M3.5 8.5 Q3.5 14 9 14 Q14.5 14 14.5 8.5 M9 14v3" fill="none" stroke="#d6d6d6" stroke-width="1.2"/><path d="M2 1.5 L16 17" stroke="#1f1f1f" stroke-width="2.6"/><path d="M2 1.5 L16 17" stroke="#d6d6d6" stroke-width="1.2"/></svg>
<div class="a" style="left:1622px;top:777px;width:32px;height:32px;border-radius:50%;background:#d9ded5;color:#3b4a30;font-size:12.5px;text-align:center;line-height:32px;-webkit-text-stroke:0.4px #3b4a30">ИЛ</div>
<div class="a" style="left:1662px;top:785px;font-size:13.5px;color:#ececec;white-space:pre;-webkit-text-stroke:0.25px #ececec">Иван Литошенко</div>
<svg class="a" style="left:1882px;top:784px" width="18" height="18" viewBox="0 0 18 18"><rect x="6" y="1.5" width="6" height="9.5" rx="3" fill="none" stroke="#d6d6d6" stroke-width="1.2"/><path d="M3.5 8.5 Q3.5 14 9 14 Q14.5 14 14.5 8.5 M9 14v3" fill="none" stroke="#d6d6d6" stroke-width="1.2"/><path d="M2 1.5 L16 17" stroke="#1f1f1f" stroke-width="2.6"/><path d="M2 1.5 L16 17" stroke="#d6d6d6" stroke-width="1.2"/></svg>
<div class="a" style="left:1622px;top:825px;width:32px;height:32px;border-radius:50%;background:#e2ead2;color:#5a6b38;font-size:13px;text-align:center;line-height:32px;-webkit-text-stroke:0.4px #5a6b38">И</div>
<div class="a" style="left:1662px;top:825px;font-size:13.5px;color:#ececec;white-space:pre;-webkit-text-stroke:0.25px #ececec">Игорь (гость)</div>
<div class="a" style="left:1662px;top:844px;font-size:12px;color:#a3a3a3;white-space:pre">Гость собрания</div>
<svg class="a" style="left:1882px;top:832px" width="18" height="18" viewBox="0 0 18 18"><rect x="6" y="1.5" width="6" height="9.5" rx="3" fill="none" stroke="#d6d6d6" stroke-width="1.2"/><path d="M3.5 8.5 Q3.5 14 9 14 Q14.5 14 14.5 8.5 M9 14v3" fill="none" stroke="#d6d6d6" stroke-width="1.2"/><path d="M2 1.5 L16 17" stroke="#1f1f1f" stroke-width="2.6"/><path d="M2 1.5 L16 17" stroke="#d6d6d6" stroke-width="1.2"/></svg>
<div class="a" style="left:1622px;top:873px;width:32px;height:32px;border-radius:50%;background:#f1d6de;color:#8a2c4a;font-size:13px;text-align:center;line-height:32px;-webkit-text-stroke:0.4px #8a2c4a">И</div>
<div class="a" style="left:1662px;top:873px;font-size:13.5px;color:#ececec;white-space:pre;-webkit-text-stroke:0.25px #ececec">Ирина (гость)</div>
<div class="a" style="left:1662px;top:892px;font-size:12px;color:#a3a3a3;white-space:pre">Гость собрания</div>
<svg class="a" style="left:1882px;top:880px" width="18" height="18" viewBox="0 0 18 18"><rect x="6" y="1.5" width="6" height="9.5" rx="3" fill="none" stroke="#d6d6d6" stroke-width="1.2"/><path d="M3.5 8.5 Q3.5 14 9 14 Q14.5 14 14.5 8.5 M9 14v3" fill="none" stroke="#d6d6d6" stroke-width="1.2"/><path d="M2 1.5 L16 17" stroke="#1f1f1f" stroke-width="2.6"/><path d="M2 1.5 L16 17" stroke="#d6d6d6" stroke-width="1.2"/></svg>
<div class="a" style="left:1622px;top:921px;width:32px;height:32px;border-radius:50%;background:#f9edc4;color:#7a5a12;font-size:12.5px;text-align:center;line-height:32px;-webkit-text-stroke:0.4px #7a5a12">КХ</div>
<div class="a" style="left:1662px;top:921px;font-size:13.5px;color:#ececec;white-space:pre;-webkit-text-stroke:0.25px #ececec">Ксения Хаценко (гость)</div>
<div class="a" style="left:1662px;top:940px;font-size:12px;color:#a3a3a3;white-space:pre">Гость собрания</div>
<svg class="a" style="left:1882px;top:928px" width="18" height="18" viewBox="0 0 18 18"><rect x="6" y="1.5" width="6" height="9.5" rx="3" fill="none" stroke="#d6d6d6" stroke-width="1.2"/><path d="M3.5 8.5 Q3.5 14 9 14 Q14.5 14 14.5 8.5 M9 14v3" fill="none" stroke="#d6d6d6" stroke-width="1.2"/><path d="M2 1.5 L16 17" stroke="#1f1f1f" stroke-width="2.6"/><path d="M2 1.5 L16 17" stroke="#d6d6d6" stroke-width="1.2"/></svg>
<div class="a" style="left:1622px;top:969px;width:32px;height:32px;border-radius:50%;background:#f9dada;color:#8c3a3a;font-size:12.5px;text-align:center;line-height:32px;-webkit-text-stroke:0.4px #8c3a3a">ЛН</div>
<div class="a" style="left:1662px;top:977px;font-size:13.5px;color:#ececec;white-space:pre;-webkit-text-stroke:0.25px #ececec">Лукьянов Николай</div>
<svg class="a" style="left:1882px;top:976px" width="18" height="18" viewBox="0 0 18 18"><rect x="6" y="1.5" width="6" height="9.5" rx="3" fill="none" stroke="#d6d6d6" stroke-width="1.2"/><path d="M3.5 8.5 Q3.5 14 9 14 Q14.5 14 14.5 8.5 M9 14v3" fill="none" stroke="#d6d6d6" stroke-width="1.2"/><path d="M2 1.5 L16 17" stroke="#1f1f1f" stroke-width="2.6"/><path d="M2 1.5 L16 17" stroke="#d6d6d6" stroke-width="1.2"/></svg>
<!-- PPT window -->
<div class="a" style="left:47px;top:206px;width:1506px;height:54px;background:#b7472a"></div>
<!-- QAT -->
<svg class="a" style="left:65px;top:211px" width="16" height="16" viewBox="0 0 16 16"><path d="M1.5 1.5 H13 L14.5 3 V14.5 H1.5 Z" fill="none" stroke="#f6e2dc" stroke-width="1.4"/><rect x="4" y="1.5" width="7" height="5" fill="none" stroke="#f6e2dc" stroke-width="1.3"/><rect x="4.5" y="10" width="6" height="4.5" fill="none" stroke="#f6e2dc" stroke-width="1.3"/></svg>
<svg class="a" style="left:106px;top:211px" width="16" height="16" viewBox="0 0 16 16"><path d="M5 3 L1.8 6.2 L5 9.4 M2 6.2 H10 Q14 6.2 14 10 Q14 13.8 10 13.8 H8" fill="none" stroke="#f6e2dc" stroke-width="1.5"/></svg>
<svg class="a" style="left:129px;top:216px" width="6" height="4" viewBox="0 0 6 4"><path d="M0 0 H6 L3 3.5 Z" fill="#f0d0c6"/></svg>
<svg class="a" style="left:152px;top:211px" width="16" height="16" viewBox="0 0 16 16"><path d="M9 2.5 A6 6 0 1 1 4 4.2" fill="none" stroke="#f6e2dc" stroke-width="1.6"/><path d="M3 1.5 L4.6 5 L8 4" fill="none" stroke="#f6e2dc" stroke-width="1.4"/></svg>
<svg class="a" style="left:196px;top:211px" width="18" height="16" viewBox="0 0 18 16"><path d="M1 1.5 H15 M2.5 1.5 V9 H13.5 V1.5 M8 9 V12 M5 15 L8 12 L11 15" fill="none" stroke="#f6e2dc" stroke-width="1.3"/><circle cx="12" cy="8" r="3.5" fill="#b7472a" stroke="#f6e2dc" stroke-width="1.2"/><path d="M11 6.3 L13.5 8 L11 9.7Z" fill="#f6e2dc"/></svg>
<svg class="a" style="left:245px;top:214px" width="8" height="9" viewBox="0 0 8 9"><path d="M1 1 H7 M1 4 H7 L4 7.5 Z" fill="#f0d0c6" stroke="#f0d0c6" stroke-width="1"/></svg>
<div class="a" style="left:630px;top:214px;font-size:11.7px;color:#f3d6cb;white-space:nowrap">presentation 2023-05-27 - PowerPoint (Product Activation Failed)</div>
<!-- window controls -->
<svg class="a" style="left:1389px;top:213px" width="14" height="12" viewBox="0 0 14 12"><rect x="0.5" y="0.5" width="13" height="10" fill="none" stroke="#d68a74" stroke-width="1"/><path d="M7 9 V3 M4.5 5.5 L7 3 L9.5 5.5 M3 2 H11" fill="none" stroke="#d68a74" stroke-width="1.2"/></svg>
<div class="a" style="left:1436px;top:220px;width:10px;height:1px;background:#d68a74"></div>
<svg class="a" style="left:1480px;top:213px" width="12" height="11" viewBox="0 0 12 11"><rect x="0.5" y="3" width="8" height="7.5" fill="none" stroke="#d68a74" stroke-width="1"/><path d="M3 3 V0.5 H11 V8 H8.5" fill="none" stroke="#d68a74" stroke-width="1"/></svg>
<svg class="a" style="left:1525px;top:214px" width="10" height="10" viewBox="0 0 10 10"><path d="M0.5 0.5 L9.5 9.5 M9.5 0.5 L0.5 9.5" stroke="#e09a86" stroke-width="1.2"/></svg>
<!-- tabs -->
<div class="a" style="left:107px;top:236px;width:54px;height:24px;background:#f1f1f1"></div>
<div class="a pt" style="left:66px;top:241px">File</div>
<div class="a pt" style="left:118px;top:241px;color:#b7472a">Home</div>
<div class="a pt" style="left:172px;top:241px">Insert</div>
<div class="a pt" style="left:223px;top:241px">Design</div>
<div class="a pt" style="left:282px;top:241px">Transitions</div>
<div class="a pt" style="left:360px;top:241px">Animations</div>
<div class="a pt" style="left:441px;top:241px">Slide Show</div>
<div class="a pt" style="left:521px;top:241px">Review</div>
<div class="a pt" style="left:581px;top:241px">View</div>
<svg class="a" style="left:630px;top:240px" width="10" height="14" viewBox="0 0 10 14"><path d="M5 1 A4 4 0 0 1 7.5 8.2 V10.5 H2.5 V8.2 A4 4 0 0 1 5 1 Z M3 12.5 H7" fill="none" stroke="#f0c8b8" stroke-width="1"/></svg>
<div class="a pt" style="left:646px;top:241px;color:#f0c8b8">Tell me what you want to do...</div>
<div class="a pt" style="left:1438px;top:241px">Sign in</div>
<div class="a" style="left:1482px;top:236px;width:71px;height:24px;background:#a03d24"></div>
<svg class="a" style="left:1487px;top:239px" width="16" height="17" viewBox="0 0 16 17"><circle cx="7" cy="5.5" r="4" fill="none" stroke="#f6e2dc" stroke-width="1.2"/><path d="M1 16 Q1.5 10.5 7 10.5 Q9 10.5 10 11.2 M12 10.5 V16 M9.3 13.3 H14.7" fill="none" stroke="#f6e2dc" stroke-width="1.2"/></svg>
<div class="a pt" style="left:1505px;top:241px">Share</div>
<!-- ribbon -->
<div class="a" style="left:47px;top:260px;width:1506px;height:87px;background:#f1f1f1"></div>
<div class="a" style="left:47px;top:346px;width:1506px;height:1px;background:#d6d6d6"></div>

<!-- Clipboard group -->
<svg class="a" style="left:58px;top:265px" width="28" height="32" viewBox="0 0 28 32"><rect x="1" y="4" width="21" height="24" rx="1" fill="#eac27a"/><rect x="6" y="1.5" width="11" height="5" rx="1" fill="#6a6a6a"/><path d="M15 13 H23 L27 17 V31 H15 Z" fill="#fff" stroke="#666" stroke-width="1"/></svg>
<div class="rt" style="left:54px;top:299px;font-size:12px">Paste</div>
<svg class="a" style="left:66px;top:318px" width="6" height="4" viewBox="0 0 6 4"><path d="M0 0 H6 L3 3.5 Z" fill="#555"/></svg>
<svg class="a" style="left:92px;top:266px" width="13" height="14" viewBox="0 0 13 14"><circle cx="3.5" cy="11" r="2.3" fill="none" stroke="#b0b0b0" stroke-width="1.1"/><circle cx="9.5" cy="11" r="2.3" fill="none" stroke="#b0b0b0" stroke-width="1.1"/><path d="M4.5 9 L10.5 0.5 M8.5 9 L2.5 0.5" stroke="#b0b0b0" stroke-width="1.1"/></svg>
<div class="rd" style="left:109px;top:267px">Cut</div>
<svg class="a" style="left:92px;top:288px" width="14" height="15" viewBox="0 0 14 15"><rect x="0.5" y="0.5" width="8" height="10" fill="#f4f4f4" stroke="#b0b0b0"/><rect x="4.5" y="4.5" width="9" height="10" fill="#f4f4f4" stroke="#b0b0b0"/></svg>
<div class="rd" style="left:109px;top:289px">Copy</div>
<svg class="a" style="left:143px;top:293px" width="6" height="4" viewBox="0 0 6 4"><path d="M0 0 H6 L3 3.5 Z" fill="#bbb"/></svg>
<svg class="a" style="left:93px;top:310px" width="14" height="14" viewBox="0 0 14 14"><path d="M1 13 L6 8 M5 6 L8 9 L13 3 L10 1 Z" fill="#c4c4c4" stroke="#b8b8b8" stroke-width="1.2"/></svg>
<div class="rd" style="left:110px;top:311px">Format Painter</div>
<div class="gl" style="left:63px;top:333px;width:100px">Clipboard</div>
<svg class="a" style="left:182px;top:336px" width="7" height="7" viewBox="0 0 7 7"><path d="M0.5 0.5 H6.5 V6.5 M2 2 L6 6 M6 3.5 V6 H3.5" fill="none" stroke="#a0a0a0" stroke-width="0.8"/></svg>
<div class="gs" style="left:193px"></div>
<!-- Slides group -->
<svg class="a" style="left:201px;top:264px" width="32" height="28" viewBox="0 0 32 28"><rect x="3.5" y="5.5" width="27" height="21" fill="#fff" stroke="#777" stroke-width="1"/><rect x="7" y="10" width="20" height="4" fill="#c8c8c8"/><path d="M7 18 H27 M7 21.5 H27" stroke="#aaa" stroke-width="1"/><circle cx="5" cy="5" r="3" fill="#f5b94a"/><path d="M5 0 V10 M0 5 H10 M1.5 1.5 L8.5 8.5 M8.5 1.5 L1.5 8.5" stroke="#f5b94a" stroke-width="0.8"/></svg>
<div class="rt" style="left:205px;top:299px;font-size:12px">New</div>
<div class="rt" style="left:200px;top:314px;font-size:12px">Slide</div>
<svg class="a" style="left:228px;top:320px" width="6" height="4" viewBox="0 0 6 4"><path d="M0 0 H6 L3 3.5 Z" fill="#555"/></svg>
<svg class="a" style="left:238px;top:266px" width="17" height="14" viewBox="0 0 17 14"><rect x="0.5" y="0.5" width="16" height="13" fill="#fff" stroke="#666"/><rect x="2.5" y="2.5" width="12" height="2" fill="#888"/><rect x="2.5" y="6" width="5" height="5" fill="#aaa"/><path d="M9 7 H14.5 M9 9.5 H14.5" stroke="#888"/></svg>
<div class="rt" style="left:257px;top:267px">Layout</div>
<svg class="a" style="left:294px;top:271px" width="6" height="4" viewBox="0 0 6 4"><path d="M0 0 H6 L3 3.5 Z" fill="#555"/></svg>
<svg class="a" style="left:238px;top:288px" width="17" height="15" viewBox="0 0 17 15"><rect x="2.5" y="2.5" width="14" height="12" fill="#fff" stroke="#777"/><path d="M5 7 H14 M5 10 H14" stroke="#999"/><path d="M1 5 Q2 0.5 6 1.5 M4 0 L6.2 1.6 L4.3 3.6" fill="none" stroke="#2a72c4" stroke-width="1.4"/></svg>
<div class="rt" style="left:257px;top:289px">Reset</div>
<svg class="a" style="left:238px;top:309px" width="17" height="15" viewBox="0 0 17 15"><rect x="5.5" y="2.5" width="11" height="4" fill="#fff" stroke="#d56a3a"/><rect x="5.5" y="8.5" width="11" height="6" fill="#fff" stroke="#777"/><circle cx="3" cy="3" r="2" fill="#f5b94a"/></svg>
<div class="rt" style="left:257px;top:311px">Section</div>
<svg class="a" style="left:298px;top:315px" width="6" height="4" viewBox="0 0 6 4"><path d="M0 0 H6 L3 3.5 Z" fill="#555"/></svg>
<div class="gl" style="left:213px;top:333px;width:80px">Slides</div>
<div class="gs" style="left:312px"></div>
<!-- Font group -->
<div class="a" style="left:316px;top:271px;width:87px;height:21px;background:#fff;border:1px solid #c6c6c6"></div>
<div class="a" style="left:392px;top:272px;width:10px;height:19px;background:#e8e8e8"></div>
<svg class="a" style="left:394px;top:280px" width="6" height="4" viewBox="0 0 6 4"><path d="M0 0 H6 L3 3.5 Z" fill="#c0c0c0"/></svg>
<div class="a" style="left:403px;top:271px;width:44px;height:21px;background:#fff;border:1px solid #c6c6c6"></div>
<div class="a" style="left:435px;top:272px;width:11px;height:19px;background:#e8e8e8"></div>
<svg class="a" style="left:437px;top:280px" width="6" height="4" viewBox="0 0 6 4"><path d="M0 0 H6 L3 3.5 Z" fill="#c0c0c0"/></svg>
<div class="rd" style="left:406px;top:274px;font-size:12px">60</div>
<div class="rd" style="left:452px;top:275px;font-size:13px">A</div>
<svg class="a" style="left:461px;top:273px" width="6" height="3" viewBox="0 0 6 3"><path d="M0 3 L3 0 L6 3Z" fill="#b0b0b0"/></svg>
<div class="rd" style="left:472px;top:275px;font-size:12px">A</div>
<svg class="a" style="left:480px;top:273px" width="6" height="3" viewBox="0 0 6 3"><path d="M0 0 L3 3 L6 0Z" fill="#b0b0b0"/></svg>
<div class="a" style="left:491px;top:273px;width:1px;height:17px;background:#dcdcdc"></div>
<svg class="a" style="left:499px;top:273px" width="14" height="15" viewBox="0 0 14 15"><path d="M1 9 L4 1 L7 9 M2.2 6 H5.8" fill="none" stroke="#b8b8b8" stroke-width="1.1"/><path d="M6 13 L11 7 L13.5 9.5 L9 14 Z" fill="#c8c8c8"/></svg>
<div class="rd" style="left:320px;top:302px;font-size:13px;font-weight:bold">B</div>
<div class="rd" style="left:342px;top:302px;font-size:13px;font-style:italic;font-family:'Liberation Serif'">I</div>
<div class="rd" style="left:361px;top:302px;font-size:13px;text-decoration:underline">U</div>
<div class="rd" style="left:382px;top:302px;font-size:13px;font-weight:bold;text-shadow:1px 1px 0 #d8d8d8">S</div>
<div class="rd" style="left:399px;top:304px;font-size:11px;text-decoration:line-through">abc</div>
<div class="rd" style="left:421px;top:300px;font-size:11px">AV</div>
<svg class="a" style="left:422px;top:313px" width="14" height="4" viewBox="0 0 14 4"><path d="M1 2 H13 M3 0.5 L1 2 L3 3.5 M11 0.5 L13 2 L11 3.5" fill="none" stroke="#b0b0b0" stroke-width="0.8"/></svg>
<svg class="a" style="left:438px;top:308px" width="6" height="4" viewBox="0 0 6 4"><path d="M0 0 H6 L3 3.5 Z" fill="#c0c0c0"/></svg>
<div class="rd" style="left:451px;top:302px;font-size:13px">Aa</div>
<svg class="a" style="left:470px;top:308px" width="6" height="4" viewBox="0 0 6 4"><path d="M0 0 H6 L3 3.5 Z" fill="#c0c0c0"/></svg>
<div class="a" style="left:481px;top:301px;width:1px;height:17px;background:#dcdcdc"></div>
<div class="rd" style="left:489px;top:299px;font-size:15px">A</div>
<svg class="a" style="left:506px;top:308px" width="6" height="4" viewBox="0 0 6 4"><path d="M0 0 H6 L3 3.5 Z" fill="#c0c0c0"/></svg>
<div class="gl" style="left:368px;top:333px;width:80px">Font</div>
<svg class="a" style="left:508px;top:336px" width="7" height="7" viewBox="0 0 7 7"><path d="M0.5 0.5 H6.5 V6.5 M2 2 L6 6 M6 3.5 V6 H3.5" fill="none" stroke="#a0a0a0" stroke-width="0.8"/></svg>
<div class="gs" style="left:518px"></div>

<!-- Paragraph group -->
<svg class="a" style="left:525px;top:273px" width="16" height="14" viewBox="0 0 16 14"><circle cx="2" cy="2" r="1.1" fill="#b0b0b0"/><circle cx="2" cy="7" r="1.1" fill="#b0b0b0"/><circle cx="2" cy="12" r="1.1" fill="#b0b0b0"/><path d="M5 2 H15 M5 7 H15 M5 12 H15" stroke="#c0c0c0" stroke-width="1.2"/></svg>
<svg class="a" style="left:544px;top:279px" width="6" height="4" viewBox="0 0 6 4"><path d="M0 0 H6 L3 3.5 Z" fill="#c0c0c0"/></svg>
<svg class="a" style="left:555px;top:273px" width="16" height="14" viewBox="0 0 16 14"><path d="M1.5 0.5 V3.5 M1 7 H3 M1 12 H3" stroke="#b0b0b0" stroke-width="1"/><path d="M5 2 H15 M5 7 H15 M5 12 H15" stroke="#c0c0c0" stroke-width="1.2"/></svg>
<svg class="a" style="left:575px;top:279px" width="6" height="4" viewBox="0 0 6 4"><path d="M0 0 H6 L3 3.5 Z" fill="#c0c0c0"/></svg>
<div class="a" style="left:587px;top:272px;width:1px;height:17px;background:#dcdcdc"></div>
<svg class="a" style="left:593px;top:273px" width="15" height="14" viewBox="0 0 15 14"><path d="M1 1 H14 M8 4.5 H14 M8 8 H14 M1 13 H14" stroke="#c0c0c0" stroke-width="1.2"/><path d="M6 6.2 H1.5 M3.5 4 L1.3 6.2 L3.5 8.4" fill="none" stroke="#b0b0b0" stroke-width="1.2"/></svg>
<svg class="a" style="left:614px;top:273px" width="15" height="14" viewBox="0 0 15 14"><path d="M1 1 H14 M8 4.5 H14 M8 8 H14 M1 13 H14" stroke="#c0c0c0" stroke-width="1.2"/><path d="M1 6.2 H5.5 M3.5 4 L5.7 6.2 L3.5 8.4" fill="none" stroke="#b0b0b0" stroke-width="1.2"/></svg>
<div class="a" style="left:635px;top:272px;width:1px;height:17px;background:#dcdcdc"></div>
<svg class="a" style="left:640px;top:273px" width="16" height="15" viewBox="0 0 16 15"><path d="M3 1 V14 M1 3 L3 1 L5 3 M1 12 L3 14 L5 12" fill="none" stroke="#b0b0b0" stroke-width="1.2"/><path d="M7 2.5 H15 M7 6 H15 M7 9.5 H15 M7 13 H15" stroke="#c0c0c0" stroke-width="1.1"/></svg>
<svg class="a" style="left:659px;top:280px" width="6" height="4" viewBox="0 0 6 4"><path d="M0 0 H6 L3 3.5 Z" fill="#c0c0c0"/></svg>
<svg class="a" style="left:525px;top:304px" width="13" height="11" viewBox="0 0 13 11"><path d="M0 1 H12 M0 4 H9 M0 7 H12 M0 10 H9" stroke="#b8b8b8" stroke-width="1.1"/></svg>
<svg class="a" style="left:546px;top:304px" width="13" height="11" viewBox="0 0 13 11"><path d="M0 1 H13 M2 4 H11 M0 7 H13 M2 10 H11" stroke="#b8b8b8" stroke-width="1.1"/></svg>
<svg class="a" style="left:567px;top:304px" width="13" height="11" viewBox="0 0 13 11"><path d="M0 1 H13 M4 4 H13 M0 7 H13 M4 10 H13" stroke="#b8b8b8" stroke-width="1.1"/></svg>
<svg class="a" style="left:587px;top:303px" width="13" height="12" viewBox="0 0 13 12"><path d="M0 1 H13 M0 4 H13 M0 7 H13 M0 10 H13" stroke="#b8b8b8" stroke-width="1.1"/></svg>
<div class="a" style="left:607px;top:301px;width:1px;height:17px;background:#dcdcdc"></div>
<svg class="a" style="left:613px;top:303px" width="14" height="12" viewBox="0 0 14 12"><path d="M0 1 H6 M0 4 H6 M0 7 H6 M0 10 H6 M8 1 H14 M8 4 H14 M8 7 H14 M8 10 H14" stroke="#b8b8b8" stroke-width="1.1"/></svg>
<svg class="a" style="left:632px;top:308px" width="6" height="4" viewBox="0 0 6 4"><path d="M0 0 H6 L3 3.5 Z" fill="#c0c0c0"/></svg>
<svg class="a" style="left:670px;top:265px" width="16" height="16" viewBox="0 0 16 16"><path d="M1 1 V15 M4 1 V15 M7 7 V15 M10 9 V15" stroke="#b0b0b0" stroke-width="1"/><path d="M8 6 L10.5 0.5 L13 6 M9 4 H12" fill="none" stroke="#b0b0b0" stroke-width="1"/></svg>
<div class="rd" style="left:688px;top:267px">Text Direction</div>
<svg class="a" style="left:764px;top:272px" width="6" height="4" viewBox="0 0 6 4"><path d="M0 0 H6 L3 3.5 Z" fill="#c0c0c0"/></svg>
<svg class="a" style="left:670px;top:288px" width="16" height="15" viewBox="0 0 16 15"><rect x="0.5" y="1.5" width="15" height="12" fill="none" stroke="#c0c0c0" stroke-dasharray="2 1"/><path d="M8 1 V14 M5.5 3.5 L8 1 L10.5 3.5 M5.5 11.5 L8 14 L10.5 11.5 M3 7.5 H13" fill="none" stroke="#b0b0b0" stroke-width="1"/></svg>
<div class="rd" style="left:688px;top:289px">Align Text</div>
<svg class="a" style="left:745px;top:294px" width="6" height="4" viewBox="0 0 6 4"><path d="M0 0 H6 L3 3.5 Z" fill="#c0c0c0"/></svg>
<svg class="a" style="left:670px;top:309px" width="17" height="16" viewBox="0 0 17 16"><path d="M1 2 H10 L8 5 H3 Z" fill="#c8c8c8"/><rect x="6.5" y="6.5" width="10" height="9" fill="#f4f4f4" stroke="#b8b8b8"/><path d="M9 10 H14 M9 12.5 H14" stroke="#c0c0c0"/></svg>
<div class="rd" style="left:688px;top:311px">Convert to SmartArt</div>
<svg class="a" style="left:796px;top:316px" width="6" height="4" viewBox="0 0 6 4"><path d="M0 0 H6 L3 3.5 Z" fill="#c0c0c0"/></svg>
<div class="gl" style="left:616px;top:333px;width:80px">Paragraph</div>
<svg class="a" style="left:798px;top:336px" width="7" height="7" viewBox="0 0 7 7"><path d="M0.5 0.5 H6.5 V6.5 M2 2 L6 6 M6 3.5 V6 H3.5" fill="none" stroke="#a0a0a0" stroke-width="0.8"/></svg>
<div class="gs" style="left:809px"></div>
<!-- Drawing group -->
<div class="a" style="left:814px;top:265px;width:128px;height:60px;background:#fff;border:1px solid #c6c6c6"></div>
<div class="a" style="left:928px;top:266px;width:13px;height:58px;background:#f4f4f4;border-left:1px solid #dcdcdc"></div>
<div class="a" style="left:929px;top:285px;width:12px;height:1px;background:#dcdcdc"></div>
<div class="a" style="left:929px;top:304px;width:12px;height:1px;background:#dcdcdc"></div>
<svg class="a" style="left:932px;top:273px" width="6" height="4" viewBox="0 0 6 4"><path d="M0 3.5 H6 L3 0 Z" fill="#c8c8c8"/></svg>
<svg class="a" style="left:932px;top:293px" width="6" height="4" viewBox="0 0 6 4"><path d="M0 0 H6 L3 3.5 Z" fill="#666"/></svg>
<svg class="a" style="left:932px;top:310px" width="6" height="7" viewBox="0 0 6 7"><path d="M0 0.5 H6 M0 3 H6 L3 6.5 Z" fill="#666" stroke="#666" stroke-width="0.8"/></svg>
<svg class="a" style="left:815px;top:266px" width="106" height="58" viewBox="0 0 106 58" fill="none" stroke="#555" stroke-width="1">
<rect x="2" y="3.5" width="14" height="11" stroke="#4a7ac0"/><path d="M4.5 6.5 H9 M4.5 9 H13 M4.5 11.5 H13" stroke="#4a7ac0"/>
<path d="M21 3 L34 15"/><path d="M40 3 L53 15 M49 14.5 L53 15 L52.5 11"/>
<rect x="58" y="3.5" width="14" height="11"/><ellipse cx="84" cy="9" rx="7" ry="5.5"/><rect x="96" y="3.5" width="14" height="11" rx="3"/>
<path d="M2 31 L9 22 L16 31 Z"/><path d="M21 22 H27 V31 H34"/><path d="M40 22 H46 V31 H52 M49 29 L52 31 L49 33"/>
<path d="M58 24 H65 V21 L71 27 L65 33 V30 H58 Z"/><path d="M80 21 H88 V27 H91 L84 33 L77 27 H80 Z"/><path d="M96 31 V25 Q98 21 103 21 L108 26 V31 Z"/>
<path d="M4 42 Q10 40 8 46 Q6 52 12 50 M6 48 L9 44"/><path d="M22 43 Q31 41 34 51"/><path d="M40 51 Q44 40 46 46 Q48 52 52 43"/>
<path d="M64 41 Q61 41 61 44 V45 Q61 46 59 46.5 Q61 47 61 48 V49 Q61 52 64 52"/><path d="M80 41 Q83 41 83 44 V45 Q83 46 85 46.5 Q83 47 83 48 V49 Q83 52 80 52"/>
<path d="M103 40 L105 45 L110 45 L106 48.5 L107.5 53 L103 50 L98.5 53 L100 48.5 L96 45 L101 45 Z"/>
</svg>
<svg class="a" style="left:952px;top:265px" width="30" height="30" viewBox="0 0 30 30"><rect x="1.5" y="1.5" width="13" height="13" fill="#fff" stroke="#777"/><rect x="9" y="9" width="13" height="13" fill="#efc27a"/><rect x="15.5" y="15.5" width="13" height="13" fill="#fff" stroke="#777"/></svg>
<div class="rt" style="left:945px;top:299px;font-size:12px">Arrange</div>
<svg class="a" style="left:964px;top:319px" width="6" height="4" viewBox="0 0 6 4"><path d="M0 0 H6 L3 3.5 Z" fill="#555"/></svg>
<svg class="a" style="left:996px;top:266px" width="32" height="30" viewBox="0 0 32 30"><rect x="1.5" y="1.5" width="25" height="25" rx="4" fill="#f8f8f8" stroke="#d8d8d8"/><path d="M17 27 L29 13" stroke="#d0d0d0" stroke-width="3"/></svg>
<div class="rd" style="left:995px;top:299px;font-size:12px">Quick</div>
<div class="rd" style="left:991px;top:314px;font-size:12px">Styles</div>
<svg class="a" style="left:1024px;top:320px" width="6" height="4" viewBox="0 0 6 4"><path d="M0 0 H6 L3 3.5 Z" fill="#c0c0c0"/></svg>
<svg class="a" style="left:1036px;top:265px" width="14" height="14" viewBox="0 0 14 14"><path d="M2 7 L7 2 L12 7 L7 12 Z" fill="none" stroke="#c0c0c0" stroke-width="1.1"/><path d="M4 1 L7 2" stroke="#c0c0c0"/></svg>
<div class="rd" style="left:1052px;top:266px">Shape Fill</div>
<svg class="a" style="left:1104px;top:271px" width="6" height="4" viewBox="0 0 6 4"><path d="M0 0 H6 L3 3.5 Z" fill="#c0c0c0"/></svg>
<svg class="a" style="left:1035px;top:286px" width="15" height="15" viewBox="0 0 15 15"><path d="M1 14 V3 H8 M4 11 L13 2 L14 3 L5 12 Z" fill="none" stroke="#c0c0c0" stroke-width="1.1"/></svg>
<div class="rd" style="left:1052px;top:287px">Shape Outline</div>
<svg class="a" style="left:1127px;top:293px" width="6" height="4" viewBox="0 0 6 4"><path d="M0 0 H6 L3 3.5 Z" fill="#c0c0c0"/></svg>
<svg class="a" style="left:1035px;top:308px" width="15" height="14" viewBox="0 0 15 14"><path d="M2 11 L8 2 L14 6 L9 13 Z" fill="#d8d8d8" stroke="#c0c0c0"/></svg>
<div class="rd" style="left:1052px;top:308px">Shape Effects</div>
<svg class="a" style="left:1124px;top:314px" width="6" height="4" viewBox="0 0 6 4"><path d="M0 0 H6 L3 3.5 Z" fill="#c0c0c0"/></svg>
<div class="gl" style="left:927px;top:333px;width:80px">Drawing</div>
<svg class="a" style="left:1129px;top:336px" width="7" height="7" viewBox="0 0 7 7"><path d="M0.5 0.5 H6.5 V6.5 M2 2 L6 6 M6 3.5 V6 H3.5" fill="none" stroke="#a0a0a0" stroke-width="0.8"/></svg>
<div class="gs" style="left:1140px"></div>
<!-- hand cursor -->
<svg class="a" style="left:1104px;top:283px" width="20" height="24" viewBox="0 0 20 24"><path d="M6 13 V3 Q6 1 7.7 1 Q9.4 1 9.4 3 V9 Q9.4 7.5 11 7.5 Q12.6 7.5 12.6 9.5 Q12.6 8.5 14.2 8.5 Q15.8 8.5 15.8 10.5 Q15.8 9.8 17 9.8 Q18.5 9.8 18.5 12 V16 Q18.5 22 13 22 H10 Q7 22 5 18.5 L2 13.5 Q1.2 12 2.5 11.2 Q3.8 10.5 5 12 Z" fill="#fff" stroke="#111" stroke-width="1.1"/><path d="M9.4 9 V14 M12.6 9.5 V14 M15.8 10.5 V14" stroke="#111" stroke-width="0.9"/></svg>
<!-- Editing group -->
<svg class="a" style="left:1146px;top:265px" width="15" height="15" viewBox="0 0 15 15"><circle cx="9" cy="6" r="4.5" fill="none" stroke="#2a6ab8" stroke-width="1.6"/><path d="M5.8 9.2 L1 14" stroke="#2a6ab8" stroke-width="1.8"/></svg>
<div class="rt" style="left:1164px;top:266px">Find</div>
<svg class="a" style="left:1145px;top:286px" width="16" height="16" viewBox="0 0 16 16"><text x="0" y="7" font-size="7" font-family="Liberation Sans" fill="#6a4a9a">ab</text><text x="7" y="15" font-size="7" font-family="Liberation Sans" fill="#2a6ab8">ac</text><path d="M2 9 V12 H6" fill="none" stroke="#2a6ab8" stroke-width="1"/></svg>
<div class="rt" style="left:1164px;top:287px">Replace</div>
<svg class="a" style="left:1212px;top:292px" width="6" height="4" viewBox="0 0 6 4"><path d="M0 0 H6 L3 3.5 Z" fill="#555"/></svg>
<svg class="a" style="left:1148px;top:306px" width="12" height="16" viewBox="0 0 12 16"><path d="M1 1 V13 L4 10 L6.5 15 L8.5 14 L6 9 H10 Z" fill="#fff" stroke="#555" stroke-width="1"/></svg>
<div class="rt" style="left:1164px;top:308px">Select</div>
<svg class="a" style="left:1197px;top:313px" width="6" height="4" viewBox="0 0 6 4"><path d="M0 0 H6 L3 3.5 Z" fill="#555"/></svg>
<div class="gl" style="left:1143px;top:333px;width:80px">Editing</div>
<div class="gs" style="left:1225px"></div>
<svg class="a" style="left:1534px;top:334px" width="11" height="7" viewBox="0 0 11 7"><path d="M1 6 L5.5 1.5 L10 6" fill="none" stroke="#555" stroke-width="1.3"/></svg>

<!-- workspace -->
<div class="a" style="left:47px;top:347px;width:1506px;height:636px;background:#e6e6e6"></div>
<div class="a" style="left:284px;top:349px;width:1px;height:634px;background:#cacaca"></div>
<!-- thumb scrollbar -->
<div class="a" style="left:266px;top:349px;width:15px;height:631px;background:#dcdcdc"></div>
<div class="a" style="left:266px;top:349px;width:15px;height:15px;background:#fff;border:1px solid #c4c4c4"></div>
<svg class="a" style="left:269px;top:353px" width="9" height="6" viewBox="0 0 9 6"><path d="M0.5 5 L4.5 1 L8.5 5 Z" fill="#666"/></svg>
<div class="a" style="left:266px;top:364px;width:15px;height:128px;background:#fff;border:1px solid #c4c4c4"></div>
<div class="a" style="left:266px;top:966px;width:15px;height:15px;background:#fff;border:1px solid #c4c4c4"></div>
<svg class="a" style="left:269px;top:971px" width="9" height="6" viewBox="0 0 9 6"><path d="M0.5 1 L4.5 5 L8.5 1 Z" fill="#666"/></svg>
<!-- thumb numbers -->
<div class="a" style="left:58px;top:363px;font-size:13px;color:#d04a2a">1</div>
<div class="a" style="left:58px;top:511px;font-size:13px;color:#444">2</div>
<div class="a" style="left:58px;top:659px;font-size:13px;color:#444">3</div>
<div class="a" style="left:58px;top:807px;font-size:13px;color:#444">4</div>
<div class="a" style="left:58px;top:955px;font-size:13px;color:#444">5</div>
<!-- thumbnails -->
<div class="a" style="left:71px;top:363px;width:176px;height:134px;border:2px solid #ea6a45;background:#f4c8b8"></div>
<div class="a th" style="left:73px;top:365px;width:172px;height:130px">
<svg class="a" style="left:0;top:0" width="172" height="130" viewBox="0 0 172 130"><path d="M136 0 C156 30 176 70 172 130 L172 0Z" fill="#cbd9e6" opacity=".45"/><path d="M140 0 C160 28 174 60 170 92 C166 110 150 120 128 130" fill="none" stroke="#9ab0c4" stroke-width="1"/><path d="M147 0 C164 28 176 62 168 94" fill="none" stroke="#fff" stroke-width="1.2"/></svg>
<div class="a" style="left:0;top:34px;width:172px;text-align:center;font-family:'Liberation Serif';font-size:10.5px;letter-spacing:0.4px;-webkit-text-stroke:0.35px #111;line-height:12.5px;color:#111">О переводе русских<br>фильмов на монгольский<br>язык</div>
<div class="a" style="left:0;top:83px;width:145px;text-align:right;font-family:'Liberation Serif';font-size:3.9px;line-height:4px;letter-spacing:0.12px;color:#000;-webkit-text-stroke:0.15px #000;white-space:pre;">Аспирант, старший преподаватель кафедры английского,</div>
<div class="a" style="left:0;top:87px;width:145px;text-align:right;font-family:'Liberation Serif';font-size:3.9px;line-height:4px;letter-spacing:0.12px;color:#000;-webkit-text-stroke:0.15px #000;white-space:pre;">немецкого языков  Монгольского государственного университета</div>
<div class="a" style="left:0;top:91px;width:145px;text-align:right;font-family:'Liberation Serif';font-size:3.9px;line-height:4px;letter-spacing:0.12px;color:#000;-webkit-text-stroke:0.15px #000;white-space:pre;">образования</div>
<div class="a" style="left:0;top:95px;width:145px;text-align:right;font-family:'Liberation Serif';font-size:3.9px;line-height:4px;letter-spacing:0.12px;color:#000;-webkit-text-stroke:0.15px #000;white-space:pre;font-weight:bold;">Нанжидмаа Хишигдулам </div>
<div class="a" style="left:0;top:99px;width:145px;text-align:right;font-family:'Liberation Serif';font-size:3.9px;line-height:4px;letter-spacing:0.12px;color:#000;-webkit-text-stroke:0.15px #000;white-space:pre;">Аспирант, старший преподаватель кафедры английского,</div>
<div class="a" style="left:0;top:103px;width:145px;text-align:right;font-family:'Liberation Serif';font-size:3.9px;line-height:4px;letter-spacing:0.12px;color:#000;-webkit-text-stroke:0.15px #000;white-space:pre;">немецкого языков  Монгольского государственного университета</div>
<div class="a" style="left:0;top:107px;width:145px;text-align:right;font-family:'Liberation Serif';font-size:3.9px;line-height:4px;letter-spacing:0.12px;color:#000;-webkit-text-stroke:0.15px #000;white-space:pre;">образования </div>
<div class="a" style="left:0;top:111px;width:145px;text-align:right;font-family:'Liberation Serif';font-size:3.9px;line-height:4px;letter-spacing:0.12px;color:#000;-webkit-text-stroke:0.15px #000;white-space:pre;font-weight:bold;">Үржин Цэцэгням</div>
</div>
<div class="a" style="left:72px;top:513px;width:174px;height:131px;background:#d0d0d0"></div>
<div class="a th" style="left:73px;top:514px;width:172px;height:129px">
<svg class="a" style="left:0;top:0" width="172" height="129" viewBox="0 0 172 129"><path d="M136 0 C156 30 176 70 172 129 L172 0Z" fill="#cbd9e6" opacity=".45"/><path d="M140 0 C160 28 174 60 170 92 C166 110 150 120 128 129" fill="none" stroke="#9ab0c4" stroke-width="1"/><path d="M147 0 C164 28 176 62 168 94" fill="none" stroke="#fff" stroke-width="1.2"/></svg>
<div class="a" style="left:0;top:6px;width:172px;text-align:center;font-size:9.5px;color:#222">Радуга /1943г/</div>
<div class="a" style="left:46px;top:19px;width:81px;height:108px;overflow:hidden;background:linear-gradient(#4a4444,#363030)">
<div class="a" style="left:0;top:0;width:36px;height:42px;background:linear-gradient(170deg,#7a929c,#a8b0b4);filter:blur(1px)"></div>
<div class="a" style="left:0;top:40px;width:36px;height:34px;background:linear-gradient(#c8b4ac,#b09890);filter:blur(1px)"></div>
<div class="a" style="left:0;top:38px;width:34px;height:1px;background:#3a3a3a;transform:rotate(6deg)"></div>
<div class="a" style="left:0;top:50px;width:34px;height:1px;background:#3a3a3a;transform:rotate(-4deg)"></div>
<div class="a" style="left:26px;top:-4px;width:60px;height:86px;border-radius:48% 40% 30% 30%;background:#2e2a2a;filter:blur(1px)"></div>
<div class="a" style="left:0;top:66px;width:81px;height:16px;background:#2e2a2a;clip-path:polygon(0 60%,100% 0,100% 100%,0 100%);filter:blur(0.8px)"></div>
<div class="a" style="left:38px;top:6px;width:38px;height:50px;border-radius:45% 40% 45% 55%;background:radial-gradient(ellipse at 50% 40%,#f0cc9c,#dcae7a 65%,#b88a5a);filter:blur(0.5px)"></div>
<div class="a" style="left:4px;top:5px;font-size:5px;font-style:italic;color:#202428">с 19 июля</div>
<div class="a" style="left:0;top:79px;width:81px;height:29px;background:linear-gradient(#54403a,#6a5244)"></div>
<div class="a" style="left:13px;top:70px;font-family:'Liberation Serif';font-style:italic;font-size:21px;color:#e8e0d2">Радуга</div>
</div>
</div>
<div class="a" style="left:72px;top:661px;width:174px;height:131px;background:#d0d0d0"></div>
<div class="a th" style="left:73px;top:662px;width:172px;height:129px">
<svg class="a" style="left:0;top:0" width="172" height="129" viewBox="0 0 172 129"><path d="M136 0 C156 30 176 70 172 129 L172 0Z" fill="#cbd9e6" opacity=".45"/><path d="M140 0 C160 28 174 60 170 92 C166 110 150 120 128 129" fill="none" stroke="#9ab0c4" stroke-width="1"/><path d="M147 0 C164 28 176 62 168 94" fill="none" stroke="#fff" stroke-width="1.2"/></svg>
<div class="a" style="left:0;top:11px;width:172px;text-align:center;font-size:8.5px;color:#222">Выдающиеся писатели переводчики</div>
<div class="a" style="left:20px;top:27px;width:44px;height:44px;overflow:hidden;background:linear-gradient(#3e4248,#2a2a2e)">
<div class="a" style="left:12.8px;top:4.2px;width:18.4px;height:19.2px;border-radius:50% 50% 40% 40%;background:#e8e4dc;filter:blur(0.6px)"></div>
<div class="a" style="left:-2.2px;top:26.1px;width:48.4px;height:44.0px;border-radius:45% 45% 0 0;background:#7a2224;filter:blur(0.6px)"></div>
<div class="a" style="left:14.1px;top:9.1px;width:15.8px;height:19.2px;border-radius:45% 45% 50% 50%;background:radial-gradient(#e8d0c0,#b89070);filter:blur(0.5px)"></div>

</div>
<div class="a" style="left:21px;top:78px;width:39px;height:45px;overflow:hidden;background:linear-gradient(#c8c8c8,#e0e0e0)">
<div class="a" style="left:8.2px;top:5.5px;width:22.6px;height:19.2px;border-radius:50% 50% 40% 40%;background:#7a7a7a;filter:blur(0.6px)"></div>
<div class="a" style="left:-2.0px;top:27.4px;width:42.9px;height:45.0px;border-radius:45% 45% 0 0;background:#505050;filter:blur(0.6px)"></div>
<div class="a" style="left:13.7px;top:28.0px;width:11.7px;height:13.5px;background:#f4f4f4;clip-path:polygon(0 0,100% 0,50% 100%);filter:blur(0.4px)"></div>
<div class="a" style="left:9.8px;top:10.4px;width:19.5px;height:19.2px;border-radius:45% 45% 50% 50%;background:radial-gradient(#e8e8e8,#b0b0b0);filter:blur(0.5px)"></div>

</div>
<div class="a" style="left:71px;top:55px;width:43px;height:54px;overflow:hidden;background:#f6f6f6">
<div class="a" style="left:9.5px;top:5.9px;width:23.9px;height:19.5px;border-radius:50% 50% 40% 40%;background:#1a1a1a;filter:blur(0.6px)"></div>
<div class="a" style="left:-2.2px;top:28.1px;width:47.3px;height:54.0px;border-radius:45% 45% 0 0;background:#222;filter:blur(0.6px)"></div>
<div class="a" style="left:15.3px;top:28.7px;width:12.4px;height:16.2px;background:#f0f0f0;clip-path:polygon(0 0,100% 0,50% 100%);filter:blur(0.4px)"></div>
<div class="a" style="left:11.2px;top:10.8px;width:20.6px;height:19.5px;border-radius:45% 45% 50% 50%;background:radial-gradient(#c8c8c8,#909090);filter:blur(0.5px)"></div>

</div>
<div class="a" style="left:121px;top:28px;width:44px;height:54px;overflow:hidden;background:radial-gradient(circle at 60% 40%,#70b0f0,#2a5ab0 50%,#102040)">
<div class="a" style="left:7.8px;top:4.4px;width:21.4px;height:18.5px;border-radius:50% 50% 40% 40%;background:#1a1a1a;filter:blur(0.6px)"></div>
<div class="a" style="left:-5.7px;top:25.4px;width:48.4px;height:54.0px;border-radius:45% 45% 0 0;background:#5a3a2a;filter:blur(0.6px)"></div>
<div class="a" style="left:12.9px;top:26.0px;width:11.1px;height:16.2px;background:#c8b090;clip-path:polygon(0 0,100% 0,50% 100%);filter:blur(0.4px)"></div>
<div class="a" style="left:9.2px;top:9.1px;width:18.5px;height:18.5px;border-radius:45% 45% 50% 50%;background:radial-gradient(#d8a888,#a87858);filter:blur(0.5px)"></div>

</div>
</div>
<div class="a" style="left:72px;top:810px;width:174px;height:130px;background:#d0d0d0"></div>
<div class="a th" style="left:73px;top:811px;width:172px;height:128px">
<svg class="a" style="left:0;top:0" width="172" height="128" viewBox="0 0 172 128"><path d="M136 0 C156 30 176 70 172 128 L172 0Z" fill="#cbd9e6" opacity=".45"/><path d="M140 0 C160 28 174 60 170 92 C166 110 150 120 128 128" fill="none" stroke="#9ab0c4" stroke-width="1"/><path d="M147 0 C164 28 176 62 168 94" fill="none" stroke="#fff" stroke-width="1.2"/></svg>
<div class="a" style="left:20px;top:17px;width:68px;height:97px;overflow:hidden;background:linear-gradient(#cac4bc,#b4aca4)">
<div class="a" style="left:13.5px;top:9.0px;width:41.0px;height:33.2px;border-radius:50% 50% 40% 40%;background:#1e1c1a;filter:blur(0.6px)"></div>
<div class="a" style="left:-3.4px;top:46.7px;width:74.8px;height:97.0px;border-radius:45% 45% 0 0;background:#2a2826;filter:blur(0.6px)"></div>
<div class="a" style="left:23.4px;top:47.7px;width:21.2px;height:29.1px;background:#e8e4e0;clip-path:polygon(0 0,100% 0,50% 100%);filter:blur(0.4px)"></div>
<div class="a" style="left:16.3px;top:17.3px;width:35.4px;height:33.2px;border-radius:45% 45% 50% 50%;background:radial-gradient(ellipse at 50% 45%,#d8ccc0,#a09080);filter:blur(0.5px)"></div>

</div>
<div class="a" style="left:104px;top:47px;width:60px;text-align:center;font-size:9.5px;line-height:12.5px;color:#222">«Чапаев»<br>«Штрафной<br>батальон»,</div>
</div>
<div class="a" style="left:72px;top:958px;width:174px;height:25px;background:#d0d0d0"></div>
<div class="a th" style="left:73px;top:959px;width:172px;height:24px">
<svg class="a" style="left:0;top:0" width="172" height="24" viewBox="0 0 172 24"><path d="M140 0 C150 8 158 16 164 24" fill="none" stroke="#9ab0c4" stroke-width="1"/><path d="M147 0 C156 8 164 16 170 24" fill="none" stroke="#fff" stroke-width="1.2"/></svg>
<div class="a" style="left:11px;top:5px;width:52px;height:19px;overflow:hidden;background:linear-gradient(#8a8a8a,#c0c0c0)"><div class="a" style="left:14px;top:8px;width:26px;height:20px;border-radius:45%;background:#606060;filter:blur(1px)"></div></div>
<div class="a" style="left:89px;top:10px;font-size:9.5px;color:#222;white-space:nowrap">«Служебный</div>
</div>
<!-- main scrollbar -->
<div class="a" style="left:1537px;top:349px;width:15px;height:544px;background:#dcdcdc"></div>
<div class="a" style="left:1537px;top:349px;width:15px;height:15px;background:#fff;border:1px solid #c4c4c4"></div>
<svg class="a" style="left:1540px;top:353px" width="9" height="6" viewBox="0 0 9 6"><path d="M0.5 5 L4.5 1 L8.5 5 Z" fill="#666"/></svg>
<div class="a" style="left:1537px;top:364px;width:15px;height:26px;background:#fff;border:1px solid #c4c4c4"></div>
<div class="a" style="left:1537px;top:878px;width:15px;height:15px;background:#fff;border:1px solid #c4c4c4"></div>
<svg class="a" style="left:1540px;top:883px" width="9" height="6" viewBox="0 0 9 6"><path d="M0.5 1 L4.5 5 L8.5 1 Z" fill="#666"/></svg>
<svg class="a" style="left:1540px;top:897px" width="9" height="12" viewBox="0 0 9 12"><path d="M0.5 5 L4.5 1 L8.5 5 Z M0.5 10 L4.5 6 L8.5 10 Z" fill="#555"/></svg>
<svg class="a" style="left:1540px;top:913px" width="9" height="12" viewBox="0 0 9 12"><path d="M0.5 1 L4.5 5 L8.5 1 Z M0.5 6 L4.5 10 L8.5 6 Z" fill="#555"/></svg>
<!-- notes -->
<div class="a" style="left:285px;top:947px;width:1268px;height:1px;background:#c8c8c8"></div>
<div class="a" style="left:295px;top:954px;font-size:14px;color:#6e6e6e">Click to add notes</div>
<!-- status bar -->
<div class="a" style="left:47px;top:983px;width:1506px;height:19px;background:#f1f1f1;border-top:1px solid #d2d2d2"></div>
<div class="a" style="left:52px;top:987px;font-size:10.5px;color:#666">Slide 1 of 20</div>
<svg class="a" style="left:124px;top:986px" width="15" height="13" viewBox="0 0 15 13"><rect x="0.5" y="0.5" width="9" height="11" fill="none" stroke="#777"/><path d="M9 4 L14 9 M14 4 L9 9" stroke="#777"/></svg>
<div class="a" style="left:153px;top:987px;font-size:10.3px;color:#555">English (United States)</div>
<svg class="a" style="left:1099px;top:986px" width="12" height="12" viewBox="0 0 12 12"><path d="M6 0.5 L9 3.5 H3 Z" fill="#777"/><path d="M1 6 H11 M1 8.5 H11 M1 11 H11" stroke="#777"/></svg>
<div class="a" style="left:1114px;top:987px;font-size:11px;color:#555">Notes</div>
<svg class="a" style="left:1158px;top:986px" width="13" height="13" viewBox="0 0 13 13"><path d="M0.5 0.5 H12.5 V8.5 H6 L3 12 V8.5 H0.5 Z" fill="#666"/></svg>
<div class="a" style="left:1174px;top:987px;font-size:10.6px;color:#555">Comments</div>
<div class="a" style="left:1239px;top:983px;width:31px;height:19px;background:#c8c8c8"></div>
<svg class="a" style="left:1248px;top:986px" width="13" height="12" viewBox="0 0 13 12"><rect x="0.5" y="0.5" width="12" height="11" fill="none" stroke="#666"/><path d="M3.5 0.5 V11.5 M5.5 3 H10 V6 H5.5" fill="none" stroke="#666"/></svg>
<svg class="a" style="left:1280px;top:986px" width="13" height="12" viewBox="0 0 13 12"><rect x="0.5" y="0.5" width="5" height="4" fill="none" stroke="#666"/><rect x="7.5" y="0.5" width="5" height="4" fill="none" stroke="#666"/><rect x="0.5" y="7.5" width="5" height="4" fill="none" stroke="#666"/><rect x="7.5" y="7.5" width="5" height="4" fill="none" stroke="#666"/></svg>
<svg class="a" style="left:1312px;top:986px" width="13" height="12" viewBox="0 0 13 12"><path d="M0.5 1 Q3.5 0 6.5 1.5 Q9.5 0 12.5 1 V11 Q9.5 10 6.5 11.5 Q3.5 10 0.5 11 Z M6.5 1.5 V11.5 M2 4 H5 M2 6.5 H5 M8 4 H11 M8 6.5 H11" fill="none" stroke="#666"/></svg>
<svg class="a" style="left:1343px;top:986px" width="13" height="13" viewBox="0 0 13 13"><path d="M0.5 1 H12.5 M1.5 1 V7 H11.5 V1 M6.5 7 V10 M4 12.5 L6.5 10 L9 12.5" fill="none" stroke="#666"/></svg>
<div class="a" style="left:1370px;top:992px;width:9px;height:2px;background:#555"></div>
<div class="a" style="left:1382px;top:992px;width:96px;height:1px;background:#999"></div>
<div class="a" style="left:1430px;top:989px;width:1px;height:7px;background:#999"></div>
<div class="a" style="left:1419px;top:986px;width:4px;height:13px;background:#555"></div>
<svg class="a" style="left:1482px;top:988px" width="10" height="10" viewBox="0 0 10 10"><path d="M5 0 V10 M0 5 H10" stroke="#555" stroke-width="2"/></svg>
<div class="a" style="left:1503px;top:987px;font-size:11px;color:#555">82%</div>
<svg class="a" style="left:1535px;top:985px" width="14" height="14" viewBox="0 0 14 14"><rect x="0.5" y="0.5" width="13" height="13" fill="none" stroke="#777"/><path d="M7 2 V5 M7 9 V12 M2 7 H5 M9 7 H12 M5.5 3.5 L7 2 L8.5 3.5 M5.5 10.5 L7 12 L8.5 10.5" fill="none" stroke="#777"/></svg>
<div class="a" style="left:0;top:1002px;width:1600px;height:6px;background:#1a1a1a"></div>
<!-- name tag -->
<div class="a" style="left:13px;top:970px;width:90px;height:23px;background:rgba(30,30,30,0.85);border-radius:3px"></div>
<div class="a" style="left:19px;top:976px;font-size:11.3px;color:#f4f4f4;-webkit-text-stroke:0.2px #f4f4f4">Н.Хишигдулам</div>

<!-- main slide -->
<div class="a" style="left:526px;top:357px;width:772px;height:578px;background:#d0d4d8"></div>
<div class="a" style="left:527px;top:358px;width:770px;height:576px;overflow:hidden;background:linear-gradient(168deg,#f1f1f1 0%,#ededee 30%,#e0e6ec 52%,#cbd8e4 75%,#b9cde0 100%)">
<svg class="a" style="left:0;top:0" width="770" height="576" viewBox="0 0 770 576">
<defs>
<radialGradient id="hl" cx="0.4" cy="0.35" r="0.55"><stop offset="0" stop-color="#ffffff" stop-opacity="0.3"/><stop offset="1" stop-color="#ffffff" stop-opacity="0"/></radialGradient>
</defs>
<rect width="770" height="576" fill="url(#hl)"/>
<path d="M650 0 C700 70 750 170 770 260 L770 0 Z" fill="#e6ebf0" opacity="0.75"/>
<path d="M830 60 C800 380 670 530 480 600 L840 600 Z" fill="#b2c8dc" opacity="0.55"/>
<path d="M0 480 C250 380 520 330 770 300" fill="none" stroke="#ffffff" stroke-width="26" opacity="0.08"/>
<g fill="none">
<path d="M830 60 C800 380 670 530 480 600" transform="translate(-28,1)" stroke="#a4b8ca" stroke-width="60" opacity="0.25"/>
<g stroke="#7890a6" stroke-width="0.8" opacity="0.4"><path d="M830 60 C800 380 670 530 480 600" transform="translate(0,0)"/><path d="M830 60 C800 380 670 530 480 600" transform="translate(-4,1)"/><path d="M830 60 C800 380 670 530 480 600" transform="translate(-8,2)"/><path d="M830 60 C800 380 670 530 480 600" transform="translate(-12,3)"/><path d="M830 60 C800 380 670 530 480 600" transform="translate(-16,4)"/><path d="M830 60 C800 380 670 530 480 600" transform="translate(-20,5)"/><path d="M830 60 C800 380 670 530 480 600" transform="translate(-24,6)"/><path d="M830 60 C800 380 670 530 480 600" transform="translate(-28,7)"/><path d="M830 60 C800 380 670 530 480 600" transform="translate(-32,8)"/><path d="M830 60 C800 380 670 530 480 600" transform="translate(-36,9)"/><path d="M830 60 C800 380 670 530 480 600" transform="translate(-40,10)"/><path d="M830 60 C800 380 670 530 480 600" transform="translate(-44,11)"/><path d="M830 60 C800 380 670 530 480 600" transform="translate(-48,12)"/><path d="M830 60 C800 380 670 530 480 600" transform="translate(-52,13)"/><path d="M830 60 C800 380 670 530 480 600" transform="translate(-56,14)"/></g>
<path d="M830 60 C800 380 670 530 480 600" transform="translate(-30,2)" stroke="#eef4f8" stroke-width="2.2" opacity="0.6"/>
<path d="M605 0 C640 25 680 60 700 95 C730 150 760 230 770 300" stroke="#9fb1c2" stroke-width="14" opacity="0.35"/>
<path d="M612 0 C650 30 685 65 703 100 C732 160 760 240 770 320" stroke="#7a8fa2" stroke-width="1.6" opacity="0.6"/>
<path d="M628 0 C665 30 695 70 710 100 C738 160 762 235 770 290" stroke="#8a9eb2" stroke-width="1.4" opacity="0.55"/>
<path d="M642 0 C675 30 702 65 716 100 C742 160 764 225 770 270" stroke="#ffffff" stroke-width="2.5" opacity="0.65"/>
<path d="M672 0 C700 60 735 140 770 215" stroke="#ffffff" stroke-width="1.5" opacity="0.5"/>
<path d="M655 0 C690 50 715 90 722 110" stroke="#8ea2b4" stroke-width="1.2" opacity="0.5"/>
</g>
</svg>
</div>
<div class="a st" style="left:527px;top:496px;width:770px;word-spacing:2px">О переводе русских</div>
<div class="a st" style="left:527px;top:552px;width:770px">фильмов на монгольский</div>
<div class="a st" style="left:527px;top:608px;width:770px">язык</div>
<div class="a ss" style="top:727px">Аспирант, старший преподаватель кафедры английского,</div>
<div class="a ss" style="top:742px">немецкого языков  Монгольского государственного университета</div>
<div class="a ss" style="top:757px">образования</div>
<div class="a ss sb" style="top:776px">Нанжидмаа Хишигдулам&nbsp;</div>
<div class="a ss" style="top:796px">Аспирант, старший преподаватель кафедры английского,</div>
<div class="a ss" style="top:811px">немецкого языков  Монгольского государственного университета</div>
<div class="a ss" style="top:826px">образования&nbsp;</div>
<div class="a ss sb" style="top:845px">Үржин Цэцэгням</div>

<div class="a" style="left:0;top:1007px;width:1920px;height:1px;background:#2c3a26"></div>
</body></html>
